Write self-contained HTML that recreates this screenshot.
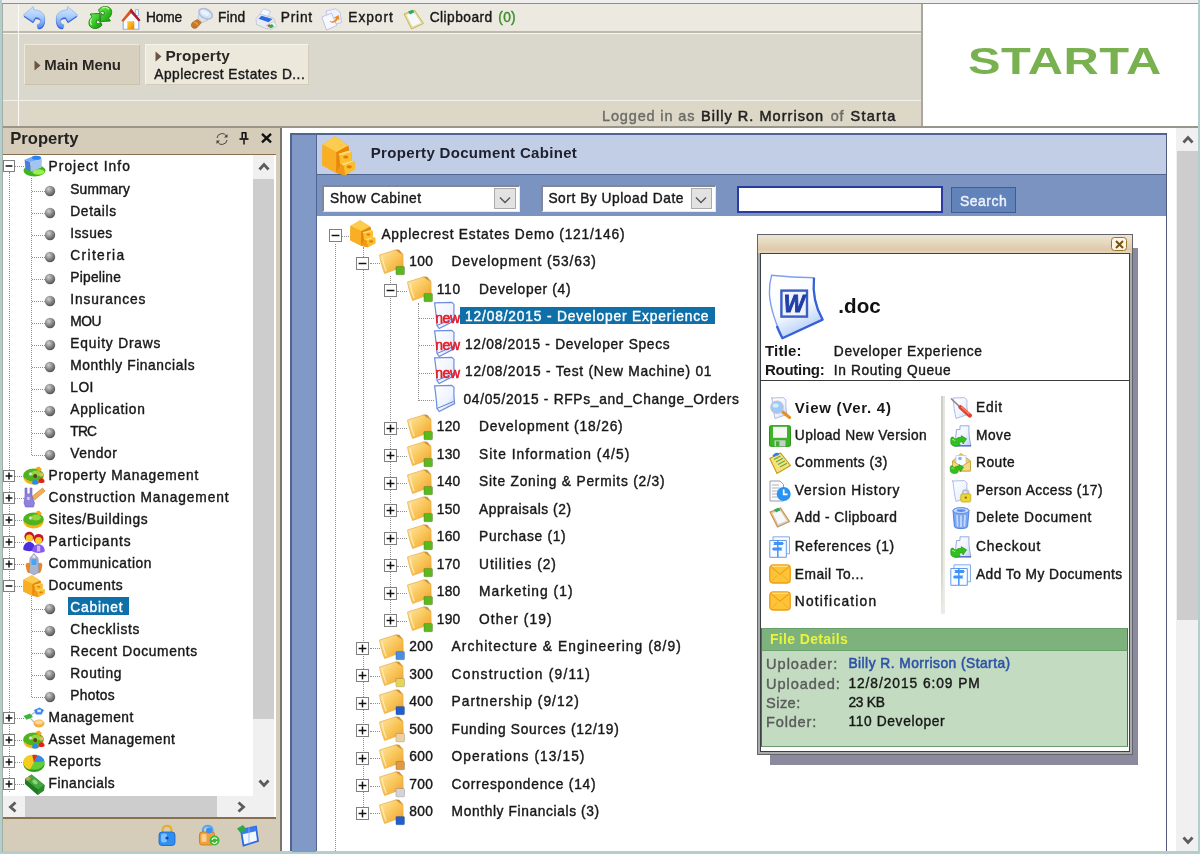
<!DOCTYPE html>
<html lang="en"><head><meta charset="utf-8"><title>Property Document Cabinet</title>
<style>
*{box-sizing:border-box;margin:0;padding:0}
html,body{width:1200px;height:854px;overflow:hidden}
body{background:#b4cfcb;font-family:"Liberation Sans","DejaVu Sans",sans-serif;font-size:13.75px;color:#181818;position:relative}
.a{position:absolute}
.t{position:absolute;white-space:pre;line-height:18px;height:18px;-webkit-text-stroke:0.4px currentColor;filter:blur(0.25px)}
.b{font-weight:bold;-webkit-text-stroke:0}
svg{position:absolute;overflow:visible}
</style></head>
<body>
<svg width="0" height="0" style="left:0;top:0"><defs><radialGradient id="bul" cx="0.38" cy="0.32" r="0.75"><stop offset="0" stop-color="#d0d0d0"/><stop offset="0.5" stop-color="#8a8a8a"/><stop offset="1" stop-color="#4a4a4a"/></radialGradient><linearGradient id="blu" x1="0" y1="0" x2="0" y2="1"><stop offset="0" stop-color="#d4e6fd"/><stop offset="0.5" stop-color="#a9cbfa"/><stop offset="1" stop-color="#5b8cec"/></linearGradient><linearGradient id="grn" x1="0" y1="0" x2="1" y2="1"><stop offset="0" stop-color="#7cf060"/><stop offset="0.6" stop-color="#2fbe20"/><stop offset="1" stop-color="#1e8a12"/></linearGradient><linearGradient id="org" x1="0" y1="0" x2="1" y2="1"><stop offset="0" stop-color="#ffd24a"/><stop offset="0.55" stop-color="#f8a818"/><stop offset="1" stop-color="#e07f08"/></linearGradient><linearGradient id="fol" x1="0" y1="0" x2="1" y2="1"><stop offset="0" stop-color="#ffe9a8"/><stop offset="0.5" stop-color="#f9c75c"/><stop offset="1" stop-color="#f0a02c"/></linearGradient><linearGradient id="pap" x1="0" y1="0" x2="1" y2="1"><stop offset="0" stop-color="#ffffff"/><stop offset="0.6" stop-color="#eef3fd"/><stop offset="1" stop-color="#b9cdf6"/></linearGradient></defs></svg>
<div class="a" style="left:2px;top:0px;width:1196px;height:3px;background:#eeeeee;"></div>
<div class="a" style="left:2px;top:3px;width:1196px;height:1px;background:#8f8f8f;"></div>
<div class="a" style="left:1.6px;top:3.5px;width:1.3px;height:848px;background:#a3aea8;"></div>
<div class="a" style="left:2.8px;top:4px;width:920.2px;height:28px;background:#ece9e0;"></div>
<div class="a" style="left:3px;top:31.3px;width:920px;height:1.3px;background:#bdb9ae;"></div>
<div class="a" style="left:3px;top:32.6px;width:920px;height:1.6px;background:#f7f5ef;"></div>
<div class="a" style="left:3px;top:34px;width:920px;height:66px;background:#dad7cd;"></div>
<div class="a" style="left:3px;top:100px;width:920px;height:1px;background:#f4f1ea;"></div>
<div class="a" style="left:3px;top:101px;width:920px;height:25px;background:#ddd7c7;"></div>
<div class="a" style="left:18px;top:4px;width:1px;height:122px;background:#fbfaf6;"></div>
<div class="a" style="left:923px;top:4px;width:275px;height:123px;background:#ffffff;"></div>
<div class="a" style="left:921.3px;top:4px;width:1.5px;height:123px;background:#a9a79f;"></div>
<div class="a" style="left:3px;top:126px;width:1195px;height:1.6px;background:#98958a;"></div>
<div class="a" style="left:3px;top:127.6px;width:1195px;height:0.4px;background:#ffffff;"></div>
<div class="t" style="left:146.0px;top:8.5px;letter-spacing:-0.20px;">Home</div>
<div class="t" style="left:218.0px;top:8.5px;letter-spacing:0.16px;">Find</div>
<div class="t" style="left:280.8px;top:8.5px;letter-spacing:0.76px;">Print</div>
<div class="t" style="left:348.3px;top:8.5px;letter-spacing:0.95px;">Export</div>
<div class="t" style="left:429.7px;top:8.5px;letter-spacing:0.46px;">Clipboard</div>
<div class="t" style="left:498.3px;top:8.5px;letter-spacing:0.27px;color:#3d8f2e;">(0)</div>
<svg style="left:23px;top:6px;filter:blur(0.5px)" width="22" height="24" viewBox="0 0 22 24"><g><path d="M0.3 9 L10.3 0.5 L10.9 3.8 C15 4 19.5 5.5 21.3 9.5 C22.3 13 21.8 17.5 19.4 20 C18 21.3 16 21.6 14.6 21.4 C14.2 20.6 14 19.8 14.1 18.8 C16.5 17.8 18 16.3 17.6 14.3 C17.2 12.3 15 11.4 12.5 11.3 L9.8 15.5 Z" transform="translate(0.3 1.7)" fill="#3a66d6"/><path d="M0.3 9 L10.3 0.5 L10.9 3.8 C15 4 19.5 5.5 21.3 9.5 C22.3 13 21.8 17.5 19.4 20 C18 21.3 16 21.6 14.6 21.4 C14.2 20.6 14 19.8 14.1 18.8 C16.5 17.8 18 16.3 17.6 14.3 C17.2 12.3 15 11.4 12.5 11.3 L9.8 15.5 Z" fill="url(#blu)" stroke="#6f9cf0" stroke-width="0.5"/></g></svg>
<svg style="left:56px;top:6px;filter:blur(0.5px)" width="22" height="24" viewBox="0 0 22 24"><g transform="translate(22 0) scale(-1 1)"><path d="M0.3 9 L10.3 0.5 L10.9 3.8 C15 4 19.5 5.5 21.3 9.5 C22.3 13 21.8 17.5 19.4 20 C18 21.3 16 21.6 14.6 21.4 C14.2 20.6 14 19.8 14.1 18.8 C16.5 17.8 18 16.3 17.6 14.3 C17.2 12.3 15 11.4 12.5 11.3 L9.8 15.5 Z" transform="translate(0.3 1.7)" fill="#3a66d6"/><path d="M0.3 9 L10.3 0.5 L10.9 3.8 C15 4 19.5 5.5 21.3 9.5 C22.3 13 21.8 17.5 19.4 20 C18 21.3 16 21.6 14.6 21.4 C14.2 20.6 14 19.8 14.1 18.8 C16.5 17.8 18 16.3 17.6 14.3 C17.2 12.3 15 11.4 12.5 11.3 L9.8 15.5 Z" fill="url(#blu)" stroke="#6f9cf0" stroke-width="0.5"/></g></svg>
<svg style="left:88.5px;top:6.3px;filter:blur(0.55px)" width="23" height="23" viewBox="0 0 23 23"><path d="M9.5 4 C12 0 19 -0.8 21.8 3 C23.6 6 22.4 10 19.6 12.2 L21.4 15 L11.4 15.6 L12 7.4 L14.4 9.2 C15.6 7.6 15.6 5.8 14.4 5.4 C13.2 5 12 5.6 11 6.8 Z" fill="url(#grn)" stroke="#1c7c10" stroke-width="0.9"/><path d="M13 19 C10.5 23 3.5 23.8 0.8 20 C-1 17 0.2 13 3 10.8 L1.2 8 L11.2 7.4 L10.6 15.6 L8.2 13.8 C7 15.4 7 17.2 8.2 17.6 C9.4 18 10.6 17.4 11.6 16.2 Z" fill="url(#grn)" stroke="#1c7c10" stroke-width="0.9"/><path d="M13 2.2 C15.5 1 18.5 1.5 20 3.5" stroke="#a8ff88" stroke-width="1.3" fill="none"/><path d="M2.5 12.5 C1.2 14.5 1.2 17 2.5 19" stroke="#a8ff88" stroke-width="1.3" fill="none"/></svg>
<svg style="left:121px;top:8.3px;filter:blur(0.45px)" width="20" height="22" viewBox="0 0 20 22"><path d="M14.5 1.5 h3 v6 h-3z" fill="#eef4ff" stroke="#8ab4f0" stroke-width="0.8"/><path d="M2.2 11.5 L10 4.5 L17.8 11.5 V21.3 H2.2Z" fill="#ffffff" stroke="#86b0ee" stroke-width="1.1"/><path d="M6.3 13.2 h7 v8 h-7z" fill="url(#org)"/><path d="M0.3 12.8 L10 0.5 L11.8 3.2 L2.5 13.8Z" fill="#e2541c"/><path d="M10 0.5 L19.6 12.2 L17.6 13.6 L9 3.6Z" fill="#a81a2c"/></svg>
<svg style="left:190.8px;top:7px;filter:blur(0.45px)" width="22" height="22" viewBox="0 0 22 22"><path d="M6.5 12.5 L10.5 15.5 L6 20.5 C4.5 22 1.5 21.5 0.6 19.5 C-0.2 17.5 0.8 16 2 15Z" fill="#c8782a" stroke="#9a5a1a" stroke-width="0.6"/><path d="M2.5 15.5 C4 15 6 16 6.5 18" stroke="#e8a050" stroke-width="1.3" fill="none"/><path d="M7 11 L9 4 L17 13 L11 15.5Z" fill="#dfe3ec" stroke="#aab0c0" stroke-width="0.6"/><ellipse cx="14.6" cy="6.8" rx="7.3" ry="4.6" transform="rotate(28 14.6 6.8)" fill="#cfe2fb" stroke="#b4bccc" stroke-width="1.5"/><ellipse cx="14" cy="6" rx="4.5" ry="2.2" transform="rotate(28 14 6)" fill="#e9f3ff"/></svg>
<svg style="left:254.5px;top:7.8px;filter:blur(0.45px)" width="22" height="22" viewBox="0 0 22 22"><path d="M4 7 L8.5 0.8 L15.5 3.2 L12.5 9Z" fill="#f4f8ff" stroke="#a9c0ea" stroke-width="0.7"/><path d="M1 10.5 L5 6 L18.5 10 L20.5 14.5 L12 21 L1.5 16.5Z" fill="#e8ebf2" stroke="#b4bacb" stroke-width="0.7"/><path d="M6.5 7.8 L17.5 11 L13.5 14.2 L3.6 10.8Z" fill="#2b6be2"/><path d="M11 17.5 L18.5 13.5 L22 18 L15 21.8Z" fill="#f0f3f8" stroke="#a8b0c0" stroke-width="0.5"/><path d="M13 18 L17 16 L19 18.6 L15.5 20.6Z" fill="#38b040"/><path d="M12.3 17.2 L14.5 16.2 L15.6 17.6 L13.4 18.8Z" fill="#e03a2a"/></svg>
<svg style="left:321.3px;top:8px;filter:blur(0.45px)" width="21" height="22" viewBox="0 0 21 22"><path d="M5 3 L14.5 0.8 L19 4 L20.5 14.5 L9 17.5Z" fill="#f1f2fc" stroke="#b4bbea" stroke-width="0.8"/><path d="M0.8 9 L10.5 5.2 L15.8 17.5 L5.5 22Z" fill="#f7f7fe" stroke="#b0b7e6" stroke-width="0.8"/><path d="M8.2 12.8 C10.5 14.3 13.5 13.3 15 10.5 L12.8 9.8 L17.6 7 L18.6 12 L16.8 11.3 C15 15 10.5 16.2 8.2 12.8Z" fill="#f08a22"/></svg>
<svg style="left:402.5px;top:8.6px;filter:blur(0.45px)" width="21" height="21" viewBox="0 0 21 21"><path d="M1 5 L11.5 1 L20.5 14.5 L8.5 20Z" fill="#e9dc98" stroke="#c9b468" stroke-width="1"/><path d="M3.5 6 L11 3.2 L18 14 L9.5 17.6Z" fill="#f6f8fb"/><path d="M5 2.6 L9.5 0.8 L11.5 3.2 L7 5.4Z" fill="#2fa968"/></svg>
<div class="a" style="left:23.8px;top:44.2px;width:116px;height:40.6px;background:#d8d0bf;border:1.4px solid #efe9da;border-right-color:#cbc2ad;border-bottom-color:#cbc2ad"></div>
<div class="a" style="left:145px;top:44px;width:163.5px;height:41px;background:#ece8dc;border:1.4px solid #f7f4ea;border-right-color:#d2ccb9;border-bottom-color:#d2ccb9"></div>
<svg style="left:33.5px;top:60px" width="7" height="11" viewBox="0 0 7 11"><path d="M0.5 0.5 L6.5 5.5 L0.5 10.5Z" fill="#6b5548"/></svg>
<svg style="left:155px;top:50.5px" width="7" height="11" viewBox="0 0 7 11"><path d="M0.5 0.5 L6.5 5.5 L0.5 10.5Z" fill="#6b5548"/></svg>
<div class="t b" style="left:44.3px;top:56.0px;font-size:15px;letter-spacing:-0.12px;color:#2a2622;">Main Menu</div>
<div class="t b" style="left:165.4px;top:46.8px;font-size:15.4px;letter-spacing:0.17px;color:#2a2622;">Property</div>
<div class="t" style="left:154.3px;top:66.3px;letter-spacing:0.48px;">Applecrest Estates D...</div>
<div class="t" style="left:602.0px;top:107.1px;font-size:14.5px;letter-spacing:0.85px;color:#6b6b68;">Logged in as</div>
<div class="t" style="left:701.0px;top:107.1px;font-size:14.5px;letter-spacing:1.04px;color:#222;-webkit-text-stroke:0.5px #222">Billy R. Morrison</div>
<div class="t" style="left:830.8px;top:107.1px;font-size:14.5px;letter-spacing:0.74px;color:#6b6b68;">of</div>
<div class="t" style="left:850.6px;top:107.1px;font-size:14.5px;letter-spacing:1.22px;color:#222;-webkit-text-stroke:0.5px #222">Starta</div>
<div class="t" style="left:967.6px;top:38px;height:48px;line-height:48px;font-size:37px;letter-spacing:0.4px;color:#7ab150;font-weight:bold;-webkit-text-stroke:0;filter:blur(0.5px);transform-origin:0 50%;transform:scaleX(1.318)">STARTA</div>
<div class="a" style="left:3px;top:128px;width:277px;height:26px;background:#d5cdba;"></div>
<div class="a" style="left:3px;top:154px;width:273px;height:1px;background:#8a6f4e;"></div>
<div class="a" style="left:3px;top:155px;width:273px;height:662px;background:#ffffff;"></div>
<div class="a" style="left:276px;top:128px;width:4px;height:723px;background:#d5cdba;"></div>
<div class="a" style="left:280px;top:128px;width:2px;height:723px;background:#777770;"></div>
<div class="t b" style="left:10.3px;top:130.0px;font-size:16.6px;letter-spacing:-0.01px;color:#222;">Property</div>
<svg style="left:215px;top:131.5px;filter:blur(0.35px)" width="14" height="14" viewBox="0 0 14 14"><path d="M2 6 A5 5 0 0 1 11.5 4.5" fill="none" stroke="#45453f" stroke-width="1"/><path d="M12.5 2 V5.5 H9Z" fill="#45453f"/><path d="M12 8 A5 5 0 0 1 2.5 9.5" fill="none" stroke="#45453f" stroke-width="1"/><path d="M1.5 12 V8.5 H5Z" fill="#45453f"/></svg>
<svg style="left:239px;top:132px;filter:blur(0.3px)" width="10" height="13" viewBox="0 0 10 13"><path d="M2.5 0.8 H7.5 M3.2 1 V6.2 M6.8 1 V6.2" stroke="#111" stroke-width="1.5" fill="none"/><path d="M5.8 1 h1.4 v5.5 h-1.4z" fill="#111"/><path d="M0.5 7 H9.5" stroke="#111" stroke-width="1.7"/><path d="M5 7.5 V12.5" stroke="#111" stroke-width="1.5"/></svg>
<svg style="left:261px;top:133px;filter:blur(0.3px)" width="11" height="10" viewBox="0 0 11 10"><path d="M1 0.8 L10 9.4 M10 0.8 L1 9.4" stroke="#111" stroke-width="2.4"/></svg>
<div class="a" style="left:253px;top:155px;width:21px;height:662px;background:#f0f0f0;"></div>
<div class="a" style="left:253px;top:178.5px;width:20.5px;height:540px;background:#cdcdcd;"></div>
<div class="a" style="left:3px;top:796px;width:271px;height:21px;background:#f0f0f0;"></div>
<div class="a" style="left:24.5px;top:796px;width:192.5px;height:21px;background:#cdcdcd;"></div>
<div class="a" style="left:3px;top:817px;width:273px;height:1.5px;background:#8a6f4e;"></div>
<div class="a" style="left:3px;top:818.5px;width:273px;height:32.5px;background:#d5cdba;"></div>
<svg style="left:255.5px;top:158.5px" width="16" height="16" viewBox="0 0 16 16"><path d="M-4.5 2.5 L0 -2.5 L4.5 2.5" transform="translate(8 8)" fill="none" stroke="#5c5c5c" stroke-width="2.8"/></svg>
<svg style="left:255.5px;top:775px" width="16" height="16" viewBox="0 0 16 16"><path d="M-4.5 -2.5 L0 2.5 L4.5 -2.5" transform="translate(8 8)" fill="none" stroke="#5c5c5c" stroke-width="2.8"/></svg>
<svg style="left:4.5px;top:798.5px" width="16" height="16" viewBox="0 0 16 16"><path d="M2.5 -4.5 L-2.5 0 L2.5 4.5" transform="translate(8 8)" fill="none" stroke="#5c5c5c" stroke-width="2.8"/></svg>
<svg style="left:232.5px;top:798.5px" width="16" height="16" viewBox="0 0 16 16"><path d="M-2.5 -4.5 L2.5 0 L-2.5 4.5" transform="translate(8 8)" fill="none" stroke="#5c5c5c" stroke-width="2.8"/></svg>
<div class="a" style="left:9px;top:172px;height:620px;width:0;border-left:1px dotted #8f8f8f"></div>
<div class="a" style="left:31px;top:178px;height:276.5px;width:0;border-left:1px dotted #8f8f8f"></div>
<div class="a" style="left:31px;top:596px;height:100.5px;width:0;border-left:1px dotted #8f8f8f"></div>
<div class="a" style="left:15px;top:165.8px;width:9px;height:0;border-top:1px dotted #8f8f8f"></div>
<svg style="left:3.0px;top:159.8px;filter:blur(0.25px)" width="12" height="12" viewBox="0 0 12 12"><rect x="0.5" y="0.5" width="11" height="11" fill="#fff" stroke="#808080"/><path d="M2.6 6.0 H9.4" stroke="#111" stroke-width="1.5"/></svg>
<svg style="left:23px;top:155.3px;filter:blur(0.5px)" width="22" height="23" viewBox="0 0 22 23"><ellipse cx="11.5" cy="15.6" rx="11" ry="5.8" fill="#3eb51c"/><ellipse cx="15.5" cy="17" rx="6" ry="2.8" fill="#9cf048"/><path d="M1.6 4.8 L7.4 7 L7.6 16.8 L2.4 13.6Z" fill="#4a7ce0"/><path d="M7.4 7 L19 4 L18.6 12.6 L7.6 16.8Z" fill="#a4c4f0"/><path d="M1.6 4.8 L12 0.6 L19 4 L7.4 7Z" fill="#72acf6"/><ellipse cx="13.5" cy="2.8" rx="4.6" ry="2" fill="#2a84f6"/></svg>
<div class="t" style="left:48.5px;top:158.3px;letter-spacing:1.07px;">Project Info</div>
<div class="a" style="left:32px;top:190.5px;width:13px;height:0;border-top:1px dotted #8f8f8f"></div>
<svg style="left:44.3px;top:184.5px;filter:blur(0.3px)" width="12" height="12" viewBox="0 0 12 12"><circle cx="6" cy="6" r="5.2" fill="url(#bul)"/></svg>
<div class="t" style="left:70.3px;top:180.6px;letter-spacing:0.13px;">Summary</div>
<div class="a" style="left:32px;top:212.5px;width:13px;height:0;border-top:1px dotted #8f8f8f"></div>
<svg style="left:44.3px;top:206.5px;filter:blur(0.3px)" width="12" height="12" viewBox="0 0 12 12"><circle cx="6" cy="6" r="5.2" fill="url(#bul)"/></svg>
<div class="t" style="left:70.3px;top:202.6px;letter-spacing:0.63px;">Details</div>
<div class="a" style="left:32px;top:234.5px;width:13px;height:0;border-top:1px dotted #8f8f8f"></div>
<svg style="left:44.3px;top:228.5px;filter:blur(0.3px)" width="12" height="12" viewBox="0 0 12 12"><circle cx="6" cy="6" r="5.2" fill="url(#bul)"/></svg>
<div class="t" style="left:70.3px;top:224.6px;letter-spacing:0.43px;">Issues</div>
<div class="a" style="left:32px;top:256.5px;width:13px;height:0;border-top:1px dotted #8f8f8f"></div>
<svg style="left:44.3px;top:250.5px;filter:blur(0.3px)" width="12" height="12" viewBox="0 0 12 12"><circle cx="6" cy="6" r="5.2" fill="url(#bul)"/></svg>
<div class="t" style="left:70.3px;top:246.6px;letter-spacing:1.36px;">Criteria</div>
<div class="a" style="left:32px;top:278.5px;width:13px;height:0;border-top:1px dotted #8f8f8f"></div>
<svg style="left:44.3px;top:272.5px;filter:blur(0.3px)" width="12" height="12" viewBox="0 0 12 12"><circle cx="6" cy="6" r="5.2" fill="url(#bul)"/></svg>
<div class="t" style="left:70.3px;top:268.6px;letter-spacing:0.24px;">Pipeline</div>
<div class="a" style="left:32px;top:300.5px;width:13px;height:0;border-top:1px dotted #8f8f8f"></div>
<svg style="left:44.3px;top:294.5px;filter:blur(0.3px)" width="12" height="12" viewBox="0 0 12 12"><circle cx="6" cy="6" r="5.2" fill="url(#bul)"/></svg>
<div class="t" style="left:70.3px;top:290.6px;letter-spacing:0.86px;">Insurances</div>
<div class="a" style="left:32px;top:322.5px;width:13px;height:0;border-top:1px dotted #8f8f8f"></div>
<svg style="left:44.3px;top:316.5px;filter:blur(0.3px)" width="12" height="12" viewBox="0 0 12 12"><circle cx="6" cy="6" r="5.2" fill="url(#bul)"/></svg>
<div class="t" style="left:70.3px;top:312.6px;letter-spacing:-0.48px;">MOU</div>
<div class="a" style="left:32px;top:344.5px;width:13px;height:0;border-top:1px dotted #8f8f8f"></div>
<svg style="left:44.3px;top:338.5px;filter:blur(0.3px)" width="12" height="12" viewBox="0 0 12 12"><circle cx="6" cy="6" r="5.2" fill="url(#bul)"/></svg>
<div class="t" style="left:70.3px;top:334.6px;letter-spacing:0.83px;">Equity Draws</div>
<div class="a" style="left:32px;top:366.5px;width:13px;height:0;border-top:1px dotted #8f8f8f"></div>
<svg style="left:44.3px;top:360.5px;filter:blur(0.3px)" width="12" height="12" viewBox="0 0 12 12"><circle cx="6" cy="6" r="5.2" fill="url(#bul)"/></svg>
<div class="t" style="left:70.3px;top:356.6px;letter-spacing:0.61px;">Monthly Financials</div>
<div class="a" style="left:32px;top:388.5px;width:13px;height:0;border-top:1px dotted #8f8f8f"></div>
<svg style="left:44.3px;top:382.5px;filter:blur(0.3px)" width="12" height="12" viewBox="0 0 12 12"><circle cx="6" cy="6" r="5.2" fill="url(#bul)"/></svg>
<div class="t" style="left:70.3px;top:378.6px;letter-spacing:0.49px;">LOI</div>
<div class="a" style="left:32px;top:410.5px;width:13px;height:0;border-top:1px dotted #8f8f8f"></div>
<svg style="left:44.3px;top:404.5px;filter:blur(0.3px)" width="12" height="12" viewBox="0 0 12 12"><circle cx="6" cy="6" r="5.2" fill="url(#bul)"/></svg>
<div class="t" style="left:70.3px;top:400.6px;letter-spacing:0.73px;">Application</div>
<div class="a" style="left:32px;top:432.5px;width:13px;height:0;border-top:1px dotted #8f8f8f"></div>
<svg style="left:44.3px;top:426.5px;filter:blur(0.3px)" width="12" height="12" viewBox="0 0 12 12"><circle cx="6" cy="6" r="5.2" fill="url(#bul)"/></svg>
<div class="t" style="left:70.3px;top:422.6px;letter-spacing:-0.80px;">TRC</div>
<div class="a" style="left:32px;top:454.5px;width:13px;height:0;border-top:1px dotted #8f8f8f"></div>
<svg style="left:44.3px;top:448.5px;filter:blur(0.3px)" width="12" height="12" viewBox="0 0 12 12"><circle cx="6" cy="6" r="5.2" fill="url(#bul)"/></svg>
<div class="t" style="left:70.3px;top:444.6px;letter-spacing:0.58px;">Vendor</div>
<div class="a" style="left:15px;top:476.4px;width:9px;height:0;border-top:1px dotted #8f8f8f"></div>
<svg style="left:3.0px;top:470.4px;filter:blur(0.25px)" width="12" height="12" viewBox="0 0 12 12"><rect x="0.5" y="0.5" width="11" height="11" fill="#fff" stroke="#808080"/><path d="M2.6 6.0 H9.4" stroke="#111" stroke-width="1.5"/><path d="M6.0 2.6 V9.4" stroke="#111" stroke-width="1.5"/></svg>
<svg style="left:23px;top:464.5px;filter:blur(0.5px)" width="22" height="23" viewBox="0 0 22 23"><ellipse cx="10.5" cy="12" rx="10.3" ry="7.5" fill="#f2c21e"/><ellipse cx="10.5" cy="10.2" rx="10.2" ry="6.8" fill="#4fb21e"/><ellipse cx="13" cy="8.5" rx="5" ry="3" fill="#8fd63a"/><path d="M12.5 3 l3.5 -1.5 l3 3 l-3 2z" fill="#f0a818"/><circle cx="7.5" cy="9" r="1.7" fill="#d8d8d0"/><path d="M2 13 C5 17 14 18 20 13 L19 16 C14 20 6 19.5 2.5 16Z" fill="#f5b216"/><circle cx="12.2" cy="11" r="2" fill="#5a4020"/><path d="M9 18.6 C9 13.4 15.6 13.4 15.6 18.6 C14 20.2 10.5 20.2 9 18.6Z" fill="#2a8aee"/><circle cx="18.3" cy="9.6" r="2.1" fill="#f0b060"/><path d="M15.4 17 C15.4 12 21.6 12 21.6 17 C20.3 18.4 16.6 18.4 15.4 17Z" fill="#e22020"/></svg>
<div class="t" style="left:48.5px;top:466.6px;letter-spacing:0.76px;">Property Management</div>
<div class="a" style="left:15px;top:498.4px;width:9px;height:0;border-top:1px dotted #8f8f8f"></div>
<svg style="left:3.0px;top:492.4px;filter:blur(0.25px)" width="12" height="12" viewBox="0 0 12 12"><rect x="0.5" y="0.5" width="11" height="11" fill="#fff" stroke="#808080"/><path d="M2.6 6.0 H9.4" stroke="#111" stroke-width="1.5"/><path d="M6.0 2.6 V9.4" stroke="#111" stroke-width="1.5"/></svg>
<svg style="left:23px;top:486.5px;filter:blur(0.5px)" width="22" height="23" viewBox="0 0 22 23"><path d="M9 9.5 L19.5 1 L22 4 L11.5 13Z" fill="#f3ad55" stroke="#d88828" stroke-width="0.7"/><path d="M2 1 h2 v6 h3 v-6 h2 v8 l2.5 7 l-1 4 h-8 l-1.5 -4 l1 -7z" fill="#8f82dc" stroke="#6a5cc0" stroke-width="0.6"/><rect x="4.2" y="10" width="2.4" height="3" fill="#d0d0e8"/></svg>
<div class="t" style="left:48.5px;top:488.6px;letter-spacing:0.85px;">Construction Management</div>
<div class="a" style="left:15px;top:520.4px;width:9px;height:0;border-top:1px dotted #8f8f8f"></div>
<svg style="left:3.0px;top:514.4px;filter:blur(0.25px)" width="12" height="12" viewBox="0 0 12 12"><rect x="0.5" y="0.5" width="11" height="11" fill="#fff" stroke="#808080"/><path d="M2.6 6.0 H9.4" stroke="#111" stroke-width="1.5"/><path d="M6.0 2.6 V9.4" stroke="#111" stroke-width="1.5"/></svg>
<svg style="left:23px;top:508.5px;filter:blur(0.5px)" width="22" height="23" viewBox="0 0 22 23"><ellipse cx="10.5" cy="12" rx="10.3" ry="7.5" fill="#f2c21e"/><ellipse cx="10.5" cy="10.2" rx="10.2" ry="6.8" fill="#4fb21e"/><ellipse cx="13" cy="8.5" rx="5" ry="3" fill="#8fd63a"/><path d="M12.5 3 l3.5 -1.5 l3 3 l-3 2z" fill="#f0a818"/><circle cx="7.5" cy="9" r="1.7" fill="#d8d8d0"/><path d="M2 13 C5 17 14 18 20 13 L19 16 C14 20 6 19.5 2.5 16Z" fill="#f5b216"/></svg>
<div class="t" style="left:48.5px;top:510.6px;letter-spacing:0.64px;">Sites/Buildings</div>
<div class="a" style="left:15px;top:542.4px;width:9px;height:0;border-top:1px dotted #8f8f8f"></div>
<svg style="left:3.0px;top:536.4px;filter:blur(0.25px)" width="12" height="12" viewBox="0 0 12 12"><rect x="0.5" y="0.5" width="11" height="11" fill="#fff" stroke="#808080"/><path d="M2.6 6.0 H9.4" stroke="#111" stroke-width="1.5"/><path d="M6.0 2.6 V9.4" stroke="#111" stroke-width="1.5"/></svg>
<svg style="left:23px;top:530.5px;filter:blur(0.5px)" width="22" height="23" viewBox="0 0 22 23"><circle cx="6.3" cy="5.6" r="4.9" fill="#c2182e"/><circle cx="6.3" cy="7" r="3.5" fill="#f9cc22"/><path d="M0.2 18.5 C0.2 8.5 12.4 8.5 12.4 18.5 C10 20.8 3 20.8 0.2 18.5Z" fill="#4a2fe0"/><circle cx="6.3" cy="7.2" r="3.3" fill="#f9cc22"/><circle cx="15.6" cy="7.8" r="4.9" fill="#c2182e"/><path d="M9.2 20.3 C9.2 10.8 21.8 10.8 21.8 20.3 C19 22.6 12 22.6 9.2 20.3Z" fill="#8a5af0"/><circle cx="15.6" cy="9.4" r="3.5" fill="#f9cc22"/><path d="M14 14.8 h3.2 v5.6 h-3.2z" fill="#c8b8ff"/></svg>
<div class="t" style="left:48.5px;top:532.6px;letter-spacing:0.94px;">Participants</div>
<div class="a" style="left:15px;top:564.4px;width:9px;height:0;border-top:1px dotted #8f8f8f"></div>
<svg style="left:3.0px;top:558.4px;filter:blur(0.25px)" width="12" height="12" viewBox="0 0 12 12"><rect x="0.5" y="0.5" width="11" height="11" fill="#fff" stroke="#808080"/><path d="M2.6 6.0 H9.4" stroke="#111" stroke-width="1.5"/><path d="M6.0 2.6 V9.4" stroke="#111" stroke-width="1.5"/></svg>
<svg style="left:23px;top:552.5px;filter:blur(0.5px)" width="22" height="23" viewBox="0 0 22 23"><path d="M3 14 C1.5 10 5 8.5 7 11 L7 20 C5 21 3.5 18 3 14Z" fill="#ea8a1e"/><path d="M19 14 C20.5 10 17 8.5 15 11 L15 20 C17 21 18.5 18 19 14Z" fill="#ea8a1e"/><path d="M7 5 L11 0.5 L15 5 L16 19 L11 22 L6 19Z" fill="#aab4cc" stroke="#8088a8" stroke-width="0.6"/><path d="M8.5 6 h5 v6 h-5z" fill="#48a4f4"/><circle cx="11" cy="3.6" r="1.6" fill="#d8e4fa"/></svg>
<div class="t" style="left:48.5px;top:554.6px;letter-spacing:0.62px;">Communication</div>
<div class="a" style="left:15px;top:586.4px;width:9px;height:0;border-top:1px dotted #8f8f8f"></div>
<svg style="left:3.0px;top:580.4px;filter:blur(0.25px)" width="12" height="12" viewBox="0 0 12 12"><rect x="0.5" y="0.5" width="11" height="11" fill="#fff" stroke="#808080"/><path d="M2.6 6.0 H9.4" stroke="#111" stroke-width="1.5"/></svg>
<svg style="left:23px;top:574.5px;filter:blur(0.5px)" width="22" height="23" viewBox="0 0 22 23"><g transform="scale(0.66 0.565)"><path d="M13.2 0.3 L26.3 9.7 L27.2 14.3 L29.6 16.1 L29.6 24.5 L32.6 25 L32.8 33.1 L23.1 38.9 L14.3 36.6 L0.3 29 L0.6 8.5Z" fill="#f5a31a"/><path d="M13.2 0.3 L26.3 9.7 L14.3 16.1 L0.6 8.5Z" fill="#fdcb4e"/><path d="M0.6 8.5 L14.3 16.1 L14.3 36.6 L0.3 29Z" fill="#f9ae24"/><path d="M14.3 16.1 L26.3 9.7 L27.2 14.3 L16.5 17.5 L18 28 L19 27.5 L14.3 36.6Z" fill="#e8860c"/><path d="M16.5 17.5 L27.2 14.3 L29.6 16.1 L18 19.5Z" fill="#fedb6c"/><path d="M18 19.5 L29.6 16.1 L29.6 24.5 L18 28Z" fill="#fbc030"/><path d="M19 27.5 L29.6 24.5 L32.7 25 L21.5 29.5Z" fill="#fedb6c"/><path d="M21.5 29.5 L32.7 25 L32.8 33.1 L23.1 38.9Z" fill="#fbbf2e"/><path d="M14.3 36.6 L19 27.5 L21.5 29.5 L23.1 38.9Z" fill="#f19814"/><ellipse cx="23.8" cy="20.8" rx="2.6" ry="1.5" fill="#df7d08"/><ellipse cx="27.3" cy="30.6" rx="2.6" ry="1.6" fill="#df7d08"/></g></svg>
<div class="t" style="left:48.5px;top:576.6px;letter-spacing:0.58px;">Documents</div>
<div class="a" style="left:32px;top:608.5px;width:13px;height:0;border-top:1px dotted #8f8f8f"></div>
<svg style="left:44.3px;top:602.5px;filter:blur(0.3px)" width="12" height="12" viewBox="0 0 12 12"><circle cx="6" cy="6" r="5.2" fill="url(#bul)"/></svg>
<div class="a" style="left:67.5px;top:597.3px;width:61.5px;height:18px;background:#0f6fa8;"></div>
<div class="t" style="left:70.3px;top:598.6px;letter-spacing:0.81px;color:#fff;">Cabinet</div>
<div class="a" style="left:32px;top:630.5px;width:13px;height:0;border-top:1px dotted #8f8f8f"></div>
<svg style="left:44.3px;top:624.5px;filter:blur(0.3px)" width="12" height="12" viewBox="0 0 12 12"><circle cx="6" cy="6" r="5.2" fill="url(#bul)"/></svg>
<div class="t" style="left:70.3px;top:620.6px;letter-spacing:0.72px;">Checklists</div>
<div class="a" style="left:32px;top:652.5px;width:13px;height:0;border-top:1px dotted #8f8f8f"></div>
<svg style="left:44.3px;top:646.5px;filter:blur(0.3px)" width="12" height="12" viewBox="0 0 12 12"><circle cx="6" cy="6" r="5.2" fill="url(#bul)"/></svg>
<div class="t" style="left:70.3px;top:642.6px;letter-spacing:0.66px;">Recent Documents</div>
<div class="a" style="left:32px;top:674.5px;width:13px;height:0;border-top:1px dotted #8f8f8f"></div>
<svg style="left:44.3px;top:668.5px;filter:blur(0.3px)" width="12" height="12" viewBox="0 0 12 12"><circle cx="6" cy="6" r="5.2" fill="url(#bul)"/></svg>
<div class="t" style="left:70.3px;top:664.6px;letter-spacing:0.63px;">Routing</div>
<div class="a" style="left:32px;top:696.5px;width:13px;height:0;border-top:1px dotted #8f8f8f"></div>
<svg style="left:44.3px;top:690.5px;filter:blur(0.3px)" width="12" height="12" viewBox="0 0 12 12"><circle cx="6" cy="6" r="5.2" fill="url(#bul)"/></svg>
<div class="t" style="left:70.3px;top:686.6px;letter-spacing:0.31px;">Photos</div>
<div class="a" style="left:15px;top:718.4px;width:9px;height:0;border-top:1px dotted #8f8f8f"></div>
<svg style="left:3.0px;top:712.4px;filter:blur(0.25px)" width="12" height="12" viewBox="0 0 12 12"><rect x="0.5" y="0.5" width="11" height="11" fill="#fff" stroke="#808080"/><path d="M2.6 6.0 H9.4" stroke="#111" stroke-width="1.5"/><path d="M6.0 2.6 V9.4" stroke="#111" stroke-width="1.5"/></svg>
<svg style="left:23px;top:706.5px;filter:blur(0.5px)" width="22" height="23" viewBox="0 0 22 23"><path d="M6 9.5 L13 4.5 M12 16 L6 10" stroke="#b8bcc8" stroke-width="1.2"/><path d="M0.5 9 L7 6.5 L10 10 L3.5 12.8Z" fill="#3db53a"/><path d="M11 3 L16.5 0.5 L21 3 L18.5 7.5 L13 7.5Z" fill="#3a86f0"/><rect x="14.3" y="2.6" width="3.6" height="2.6" fill="#d8e8ff"/><ellipse cx="16" cy="16.5" rx="5.5" ry="4" fill="#f2b04a"/><ellipse cx="16" cy="15.3" rx="3.8" ry="2" fill="#fbd898"/></svg>
<div class="t" style="left:48.5px;top:708.6px;letter-spacing:0.50px;">Management</div>
<div class="a" style="left:15px;top:740.4px;width:9px;height:0;border-top:1px dotted #8f8f8f"></div>
<svg style="left:3.0px;top:734.4px;filter:blur(0.25px)" width="12" height="12" viewBox="0 0 12 12"><rect x="0.5" y="0.5" width="11" height="11" fill="#fff" stroke="#808080"/><path d="M2.6 6.0 H9.4" stroke="#111" stroke-width="1.5"/><path d="M6.0 2.6 V9.4" stroke="#111" stroke-width="1.5"/></svg>
<svg style="left:23px;top:728.5px;filter:blur(0.5px)" width="22" height="23" viewBox="0 0 22 23"><ellipse cx="10.5" cy="12" rx="10.3" ry="7.5" fill="#f2c21e"/><ellipse cx="10.5" cy="10.2" rx="10.2" ry="6.8" fill="#4fb21e"/><ellipse cx="13" cy="8.5" rx="5" ry="3" fill="#8fd63a"/><path d="M12.5 3 l3.5 -1.5 l3 3 l-3 2z" fill="#f0a818"/><circle cx="7.5" cy="9" r="1.7" fill="#d8d8d0"/><path d="M2 13 C5 17 14 18 20 13 L19 16 C14 20 6 19.5 2.5 16Z" fill="#f5b216"/><circle cx="12.2" cy="11" r="2" fill="#5a4020"/><path d="M9 18.6 C9 13.4 15.6 13.4 15.6 18.6 C14 20.2 10.5 20.2 9 18.6Z" fill="#2a8aee"/><circle cx="18.3" cy="9.6" r="2.1" fill="#f0b060"/><path d="M15.4 17 C15.4 12 21.6 12 21.6 17 C20.3 18.4 16.6 18.4 15.4 17Z" fill="#e22020"/></svg>
<div class="t" style="left:48.5px;top:730.6px;letter-spacing:0.53px;">Asset Management</div>
<div class="a" style="left:15px;top:762.4px;width:9px;height:0;border-top:1px dotted #8f8f8f"></div>
<svg style="left:3.0px;top:756.4px;filter:blur(0.25px)" width="12" height="12" viewBox="0 0 12 12"><rect x="0.5" y="0.5" width="11" height="11" fill="#fff" stroke="#808080"/><path d="M2.6 6.0 H9.4" stroke="#111" stroke-width="1.5"/><path d="M6.0 2.6 V9.4" stroke="#111" stroke-width="1.5"/></svg>
<svg style="left:23px;top:750.5px;filter:blur(0.5px)" width="22" height="23" viewBox="0 0 22 23"><ellipse cx="11" cy="13.5" rx="10.6" ry="7.6" fill="#2e9e1c"/><ellipse cx="11" cy="11.3" rx="10.6" ry="7.4" fill="#63cf38"/><path d="M11 11.3 L9 3.8 C3 4.5 -0.5 8 0.5 12.5 C1 15.5 4 18 7 18.6Z" fill="#f8cb1c"/><path d="M11 11.3 L9.3 3.9 C11 3.6 13 3.7 14.5 4.2Z" fill="#e23020"/><path d="M11 11.3 L14.8 4.3 C18.5 5 21.3 8 21.5 10.6Z" fill="#3a86ea"/></svg>
<div class="t" style="left:48.5px;top:752.6px;letter-spacing:0.71px;">Reports</div>
<div class="a" style="left:15px;top:784.4px;width:9px;height:0;border-top:1px dotted #8f8f8f"></div>
<svg style="left:3.0px;top:778.4px;filter:blur(0.25px)" width="12" height="12" viewBox="0 0 12 12"><rect x="0.5" y="0.5" width="11" height="11" fill="#fff" stroke="#808080"/><path d="M2.6 6.0 H9.4" stroke="#111" stroke-width="1.5"/><path d="M6.0 2.6 V9.4" stroke="#111" stroke-width="1.5"/></svg>
<svg style="left:23px;top:772.5px;filter:blur(0.5px)" width="22" height="23" viewBox="0 0 22 23"><path d="M2 6 L8.5 1.5 L21.5 12 L21 17.5 L14.5 22 L2 11Z" fill="#1f7a24"/><path d="M2 6 L8.5 1.5 L21.5 12 L15 16.5Z" fill="#43a83e"/><ellipse cx="12" cy="9" rx="3" ry="2" transform="rotate(38 12 9)" fill="#8fd27c"/><path d="M5.5 3.5 L8 5.5 L4.5 8 L2.2 6Z" fill="#c8a058"/><path d="M15 16.5 L21.5 12 L21 17.5 L14.5 22Z" fill="#2a8a2c"/></svg>
<div class="t" style="left:48.5px;top:774.6px;letter-spacing:0.48px;">Financials</div>
<svg style="left:158px;top:824px;filter:blur(0.5px)" width="18" height="22" viewBox="0 0 18 22"><path d="M4.5 9 V6 C4.5 0.5 13.5 0.5 13.5 6 V9" fill="none" stroke="#e8b020" stroke-width="2.2"/><rect x="1" y="8" width="16" height="13.5" rx="3" fill="#2f8ef0" stroke="#1a62c8" stroke-width="0.8"/><rect x="3" y="9.5" width="6" height="9" rx="2" fill="#7cc0ff"/><circle cx="9" cy="14" r="1.6" fill="#0e4aa0"/></svg>
<svg style="left:198px;top:824px;filter:blur(0.5px)" width="22" height="22" viewBox="0 0 22 22"><path d="M5 9 V6 C5 0.5 14.5 0.5 14.5 6 V9" fill="none" stroke="#58a8f0" stroke-width="2.2"/><rect x="1.5" y="8" width="15" height="13" rx="2.5" fill="#f0a040" stroke="#c87818" stroke-width="0.8"/><rect x="3.5" y="10" width="5" height="8" rx="1.5" fill="#fbd090"/><circle cx="16.5" cy="16.5" r="5" fill="#3eb83a"/><path d="M14 16 a2.7 2.7 0 0 1 5 -0.8 M19.2 17.2 a2.7 2.7 0 0 1 -5 0.8" stroke="#e8ffd8" stroke-width="1.2" fill="none"/><circle cx="11" cy="6.5" r="3" fill="#3a90f0"/></svg>
<svg style="left:236px;top:824px;filter:blur(0.5px)" width="23" height="22" viewBox="0 0 23 22"><path d="M5 6 L20 2.5 L22 17 L7.5 21.5Z" fill="#f2f6ff" stroke="#2a6ae0" stroke-width="1.8"/><path d="M5 6 L20 2.5 L20.6 7 L5.6 10.5Z" fill="#3a7af0"/><path d="M1 4.5 L7 1 L10.5 5.5 L4.5 9Z" fill="#30a848"/><path d="M13 3 v17" stroke="#8ab0f0" stroke-width="0.8"/></svg>
<div class="a" style="left:282px;top:128px;width:916px;height:723px;background:#ffffff;"></div>
<div class="a" style="left:290px;top:133px;width:877px;height:718px;background:#506690;"></div>
<div class="a" style="left:291.6px;top:134.5px;width:24.6px;height:717px;background:#8099c6;"></div>
<div class="a" style="left:317px;top:134.5px;width:848.5px;height:39.5px;background:#c1cee6;"></div>
<div class="a" style="left:317px;top:175px;width:849px;height:41px;background:#7b93c0;"></div>
<div class="a" style="left:317px;top:216px;width:849px;height:635px;background:#ffffff;"></div>
<div class="a" style="left:1165.5px;top:133px;width:1.5px;height:718px;background:#50597a;"></div>
<div class="a" style="left:1176px;top:128px;width:22px;height:723px;background:#f0f0f0;"></div>
<div class="a" style="left:1176.5px;top:151px;width:21px;height:469px;background:#cdcdcd;"></div>
<svg style="left:1179.5px;top:131.5px" width="16" height="16" viewBox="0 0 16 16"><path d="M-4.5 2.5 L0 -2.5 L4.5 2.5" transform="translate(8 8)" fill="none" stroke="#5c5c5c" stroke-width="2.8"/></svg>
<svg style="left:1179.5px;top:832px" width="16" height="16" viewBox="0 0 16 16"><path d="M-4.5 -2.5 L0 2.5 L4.5 -2.5" transform="translate(8 8)" fill="none" stroke="#5c5c5c" stroke-width="2.8"/></svg>
<svg style="left:321.6px;top:135.6px;filter:blur(0.5px)" width="33" height="39.5" viewBox="0 0 33 39.2" preserveAspectRatio="none"><path d="M13.2 0.3 L26.3 9.7 L27.2 14.3 L29.6 16.1 L29.6 24.5 L32.6 25 L32.8 33.1 L23.1 38.9 L14.3 36.6 L0.3 29 L0.6 8.5Z" fill="#f5a31a"/><path d="M13.2 0.3 L26.3 9.7 L14.3 16.1 L0.6 8.5Z" fill="#fdcb4e"/><path d="M0.6 8.5 L14.3 16.1 L14.3 36.6 L0.3 29Z" fill="#f9ae24"/><path d="M14.3 16.1 L26.3 9.7 L27.2 14.3 L16.5 17.5 L18 28 L19 27.5 L14.3 36.6Z" fill="#e8860c"/><path d="M16.5 17.5 L27.2 14.3 L29.6 16.1 L18 19.5Z" fill="#fedb6c"/><path d="M18 19.5 L29.6 16.1 L29.6 24.5 L18 28Z" fill="#fbc030"/><path d="M19 27.5 L29.6 24.5 L32.7 25 L21.5 29.5Z" fill="#fedb6c"/><path d="M21.5 29.5 L32.7 25 L32.8 33.1 L23.1 38.9Z" fill="#fbbf2e"/><path d="M14.3 36.6 L19 27.5 L21.5 29.5 L23.1 38.9Z" fill="#f19814"/><ellipse cx="23.8" cy="20.8" rx="2.6" ry="1.5" fill="#df7d08"/><ellipse cx="27.3" cy="30.6" rx="2.6" ry="1.6" fill="#df7d08"/></svg>
<div class="t b" style="left:370.8px;top:144.1px;font-size:15px;letter-spacing:0.32px;color:#1c2030;">Property Document Cabinet</div>
<div class="a" style="left:322px;top:185px;width:197.5px;height:27px;background:#ffffff;border:1.5px solid #e3e8f2;border-top:2px solid #80879a;border-left:2px solid #80879a"></div>
<div class="a" style="left:494.0px;top:187.5px;width:21.5px;height:21.5px;background:#e2e2e2;border:1px solid #ababab"></div>
<svg style="left:498.5px;top:195.5px" width="12" height="8" viewBox="0 0 12 8"><path d="M1 1.5 L6 6.5 L11 1.5" fill="none" stroke="#555" stroke-width="1.4"/></svg>
<div class="t" style="left:330.0px;top:189.8px;letter-spacing:0.49px;">Show Cabinet</div>
<div class="a" style="left:541px;top:185px;width:175px;height:27px;background:#ffffff;border:1.5px solid #e3e8f2;border-top:2px solid #80879a;border-left:2px solid #80879a"></div>
<div class="a" style="left:690.5px;top:187.5px;width:21.5px;height:21.5px;background:#e2e2e2;border:1px solid #ababab"></div>
<svg style="left:695px;top:195.5px" width="12" height="8" viewBox="0 0 12 8"><path d="M1 1.5 L6 6.5 L11 1.5" fill="none" stroke="#555" stroke-width="1.4"/></svg>
<div class="t" style="left:548.4px;top:189.8px;letter-spacing:0.54px;">Sort By Upload Date</div>
<div class="a" style="left:737px;top:186px;width:206px;height:27px;background:#ffffff;border:2px solid #2b3aa0"></div>
<div class="a" style="left:951px;top:187px;width:65px;height:26px;background:#6283ba;border:1px solid #3f5d90"></div>
<div class="t" style="left:960.0px;top:191.7px;font-size:14px;letter-spacing:0.48px;color:#eef3fb;">Search</div>
<div class="a" style="left:335px;top:244px;height:607px;width:0;border-left:1px dotted #8f8f8f"></div>
<div class="a" style="left:362.5px;top:247px;height:566.0px;width:0;border-left:1px dotted #8f8f8f"></div>
<div class="a" style="left:390px;top:276px;height:344.5px;width:0;border-left:1px dotted #8f8f8f"></div>
<div class="a" style="left:417.5px;top:303px;height:97.5px;width:0;border-left:1px dotted #8f8f8f"></div>
<div class="a" style="left:342px;top:235.5px;width:9px;height:0;border-top:1px dotted #8f8f8f"></div>
<svg style="left:328.7px;top:229.0px;filter:blur(0.25px)" width="13" height="13" viewBox="0 0 13 13"><rect x="0.5" y="0.5" width="12" height="12" fill="#fff" stroke="#808080"/><path d="M2.6 6.5 H10.4" stroke="#111" stroke-width="1.5"/></svg>
<svg style="left:350px;top:220px;filter:blur(0.5px)" width="25.5" height="27.5" viewBox="0 0 33 39.2" preserveAspectRatio="none"><path d="M13.2 0.3 L26.3 9.7 L27.2 14.3 L29.6 16.1 L29.6 24.5 L32.6 25 L32.8 33.1 L23.1 38.9 L14.3 36.6 L0.3 29 L0.6 8.5Z" fill="#f5a31a"/><path d="M13.2 0.3 L26.3 9.7 L14.3 16.1 L0.6 8.5Z" fill="#fdcb4e"/><path d="M0.6 8.5 L14.3 16.1 L14.3 36.6 L0.3 29Z" fill="#f9ae24"/><path d="M14.3 16.1 L26.3 9.7 L27.2 14.3 L16.5 17.5 L18 28 L19 27.5 L14.3 36.6Z" fill="#e8860c"/><path d="M16.5 17.5 L27.2 14.3 L29.6 16.1 L18 19.5Z" fill="#fedb6c"/><path d="M18 19.5 L29.6 16.1 L29.6 24.5 L18 28Z" fill="#fbc030"/><path d="M19 27.5 L29.6 24.5 L32.7 25 L21.5 29.5Z" fill="#fedb6c"/><path d="M21.5 29.5 L32.7 25 L32.8 33.1 L23.1 38.9Z" fill="#fbbf2e"/><path d="M14.3 36.6 L19 27.5 L21.5 29.5 L23.1 38.9Z" fill="#f19814"/><ellipse cx="23.8" cy="20.8" rx="2.6" ry="1.5" fill="#df7d08"/><ellipse cx="27.3" cy="30.6" rx="2.6" ry="1.6" fill="#df7d08"/></svg>
<div class="t" style="left:381.4px;top:225.7px;letter-spacing:0.79px;">Applecrest Estates Demo (121/146)</div>
<div class="a" style="left:369.5px;top:263.0px;width:10.5px;height:0;border-top:1px dotted #8f8f8f"></div>
<svg style="left:356.0px;top:256.5px;filter:blur(0.25px)" width="13" height="13" viewBox="0 0 13 13"><rect x="0.5" y="0.5" width="12" height="12" fill="#fff" stroke="#808080"/><path d="M2.6 6.5 H10.4" stroke="#111" stroke-width="1.5"/></svg>
<svg style="left:379.3px;top:248.79999999999998px;filter:blur(0.45px)" width="26" height="26" viewBox="0 0 26 26"><path d="M14 2.5 L17 0.4 L20.2 0.8 L23.8 4.9 L23.6 9 Z" fill="#c8923a"/><path d="M0.5 6 L16.8 0.9 C19 3 21.5 4.5 23.9 5.2 L24.2 17.8 L5.6 24.5 C3.5 19 1.5 12 0.5 6Z" fill="url(#fol)" stroke="#e9a93c" stroke-width="0.7"/><path d="M3 7.5 C4 13 5.5 18 7.2 22.3" stroke="#fff3cc" stroke-width="1.2" fill="none" opacity="0.8"/><rect x="16.9" y="17.4" width="8.6" height="8.4" rx="1" fill="#5cb81c" stroke="rgba(0,0,0,0.22)" stroke-width="0.8"/></svg>
<div class="t" style="left:409.2px;top:253.2px;letter-spacing:0.34px;">100</div>
<div class="t" style="left:451.6px;top:253.2px;letter-spacing:0.88px;">Development (53/63)</div>
<div class="a" style="left:369.5px;top:648.0px;width:10.5px;height:0;border-top:1px dotted #8f8f8f"></div>
<svg style="left:356.0px;top:641.5px;filter:blur(0.25px)" width="13" height="13" viewBox="0 0 13 13"><rect x="0.5" y="0.5" width="12" height="12" fill="#fff" stroke="#808080"/><path d="M2.6 6.5 H10.4" stroke="#111" stroke-width="1.5"/><path d="M6.5 2.6 V10.4" stroke="#111" stroke-width="1.5"/></svg>
<svg style="left:379.3px;top:633.8px;filter:blur(0.45px)" width="26" height="26" viewBox="0 0 26 26"><path d="M14 2.5 L17 0.4 L20.2 0.8 L23.8 4.9 L23.6 9 Z" fill="#c8923a"/><path d="M0.5 6 L16.8 0.9 C19 3 21.5 4.5 23.9 5.2 L24.2 17.8 L5.6 24.5 C3.5 19 1.5 12 0.5 6Z" fill="url(#fol)" stroke="#e9a93c" stroke-width="0.7"/><path d="M3 7.5 C4 13 5.5 18 7.2 22.3" stroke="#fff3cc" stroke-width="1.2" fill="none" opacity="0.8"/><rect x="16.9" y="17.4" width="8.6" height="8.4" rx="1" fill="#4a8ee0" stroke="rgba(0,0,0,0.22)" stroke-width="0.8"/></svg>
<div class="t" style="left:409.2px;top:638.2px;letter-spacing:0.34px;">200</div>
<div class="t" style="left:451.6px;top:638.2px;letter-spacing:1.08px;">Architecture &amp; Engineering (8/9)</div>
<div class="a" style="left:369.5px;top:675.5px;width:10.5px;height:0;border-top:1px dotted #8f8f8f"></div>
<svg style="left:356.0px;top:669.0px;filter:blur(0.25px)" width="13" height="13" viewBox="0 0 13 13"><rect x="0.5" y="0.5" width="12" height="12" fill="#fff" stroke="#808080"/><path d="M2.6 6.5 H10.4" stroke="#111" stroke-width="1.5"/><path d="M6.5 2.6 V10.4" stroke="#111" stroke-width="1.5"/></svg>
<svg style="left:379.3px;top:661.3px;filter:blur(0.45px)" width="26" height="26" viewBox="0 0 26 26"><path d="M14 2.5 L17 0.4 L20.2 0.8 L23.8 4.9 L23.6 9 Z" fill="#c8923a"/><path d="M0.5 6 L16.8 0.9 C19 3 21.5 4.5 23.9 5.2 L24.2 17.8 L5.6 24.5 C3.5 19 1.5 12 0.5 6Z" fill="url(#fol)" stroke="#e9a93c" stroke-width="0.7"/><path d="M3 7.5 C4 13 5.5 18 7.2 22.3" stroke="#fff3cc" stroke-width="1.2" fill="none" opacity="0.8"/><rect x="16.9" y="17.4" width="8.6" height="8.4" rx="1" fill="#e6d35a" stroke="rgba(0,0,0,0.22)" stroke-width="0.8"/></svg>
<div class="t" style="left:409.2px;top:665.7px;letter-spacing:0.34px;">300</div>
<div class="t" style="left:451.6px;top:665.7px;letter-spacing:1.24px;">Construction (9/11)</div>
<div class="a" style="left:369.5px;top:703.0px;width:10.5px;height:0;border-top:1px dotted #8f8f8f"></div>
<svg style="left:356.0px;top:696.5px;filter:blur(0.25px)" width="13" height="13" viewBox="0 0 13 13"><rect x="0.5" y="0.5" width="12" height="12" fill="#fff" stroke="#808080"/><path d="M2.6 6.5 H10.4" stroke="#111" stroke-width="1.5"/><path d="M6.5 2.6 V10.4" stroke="#111" stroke-width="1.5"/></svg>
<svg style="left:379.3px;top:688.8px;filter:blur(0.45px)" width="26" height="26" viewBox="0 0 26 26"><path d="M14 2.5 L17 0.4 L20.2 0.8 L23.8 4.9 L23.6 9 Z" fill="#c8923a"/><path d="M0.5 6 L16.8 0.9 C19 3 21.5 4.5 23.9 5.2 L24.2 17.8 L5.6 24.5 C3.5 19 1.5 12 0.5 6Z" fill="url(#fol)" stroke="#e9a93c" stroke-width="0.7"/><path d="M3 7.5 C4 13 5.5 18 7.2 22.3" stroke="#fff3cc" stroke-width="1.2" fill="none" opacity="0.8"/><rect x="16.9" y="17.4" width="8.6" height="8.4" rx="1" fill="#1f5fd0" stroke="rgba(0,0,0,0.22)" stroke-width="0.8"/></svg>
<div class="t" style="left:409.2px;top:693.2px;letter-spacing:0.34px;">400</div>
<div class="t" style="left:451.6px;top:693.2px;letter-spacing:1.01px;">Partnership (9/12)</div>
<div class="a" style="left:369.5px;top:730.5px;width:10.5px;height:0;border-top:1px dotted #8f8f8f"></div>
<svg style="left:356.0px;top:724.0px;filter:blur(0.25px)" width="13" height="13" viewBox="0 0 13 13"><rect x="0.5" y="0.5" width="12" height="12" fill="#fff" stroke="#808080"/><path d="M2.6 6.5 H10.4" stroke="#111" stroke-width="1.5"/><path d="M6.5 2.6 V10.4" stroke="#111" stroke-width="1.5"/></svg>
<svg style="left:379.3px;top:716.3px;filter:blur(0.45px)" width="26" height="26" viewBox="0 0 26 26"><path d="M14 2.5 L17 0.4 L20.2 0.8 L23.8 4.9 L23.6 9 Z" fill="#c8923a"/><path d="M0.5 6 L16.8 0.9 C19 3 21.5 4.5 23.9 5.2 L24.2 17.8 L5.6 24.5 C3.5 19 1.5 12 0.5 6Z" fill="url(#fol)" stroke="#e9a93c" stroke-width="0.7"/><path d="M3 7.5 C4 13 5.5 18 7.2 22.3" stroke="#fff3cc" stroke-width="1.2" fill="none" opacity="0.8"/><rect x="16.9" y="17.4" width="8.6" height="8.4" rx="1" fill="#ecd2a2" stroke="rgba(0,0,0,0.22)" stroke-width="0.8"/></svg>
<div class="t" style="left:409.2px;top:720.7px;letter-spacing:0.34px;">500</div>
<div class="t" style="left:451.6px;top:720.7px;letter-spacing:0.72px;">Funding Sources (12/19)</div>
<div class="a" style="left:369.5px;top:758.0px;width:10.5px;height:0;border-top:1px dotted #8f8f8f"></div>
<svg style="left:356.0px;top:751.5px;filter:blur(0.25px)" width="13" height="13" viewBox="0 0 13 13"><rect x="0.5" y="0.5" width="12" height="12" fill="#fff" stroke="#808080"/><path d="M2.6 6.5 H10.4" stroke="#111" stroke-width="1.5"/><path d="M6.5 2.6 V10.4" stroke="#111" stroke-width="1.5"/></svg>
<svg style="left:379.3px;top:743.8px;filter:blur(0.45px)" width="26" height="26" viewBox="0 0 26 26"><path d="M14 2.5 L17 0.4 L20.2 0.8 L23.8 4.9 L23.6 9 Z" fill="#c8923a"/><path d="M0.5 6 L16.8 0.9 C19 3 21.5 4.5 23.9 5.2 L24.2 17.8 L5.6 24.5 C3.5 19 1.5 12 0.5 6Z" fill="url(#fol)" stroke="#e9a93c" stroke-width="0.7"/><path d="M3 7.5 C4 13 5.5 18 7.2 22.3" stroke="#fff3cc" stroke-width="1.2" fill="none" opacity="0.8"/><rect x="16.9" y="17.4" width="8.6" height="8.4" rx="1" fill="#e09a45" stroke="rgba(0,0,0,0.22)" stroke-width="0.8"/></svg>
<div class="t" style="left:409.2px;top:748.2px;letter-spacing:0.34px;">600</div>
<div class="t" style="left:451.6px;top:748.2px;letter-spacing:1.07px;">Operations (13/15)</div>
<div class="a" style="left:369.5px;top:785.5px;width:10.5px;height:0;border-top:1px dotted #8f8f8f"></div>
<svg style="left:356.0px;top:779.0px;filter:blur(0.25px)" width="13" height="13" viewBox="0 0 13 13"><rect x="0.5" y="0.5" width="12" height="12" fill="#fff" stroke="#808080"/><path d="M2.6 6.5 H10.4" stroke="#111" stroke-width="1.5"/><path d="M6.5 2.6 V10.4" stroke="#111" stroke-width="1.5"/></svg>
<svg style="left:379.3px;top:771.3px;filter:blur(0.45px)" width="26" height="26" viewBox="0 0 26 26"><path d="M14 2.5 L17 0.4 L20.2 0.8 L23.8 4.9 L23.6 9 Z" fill="#c8923a"/><path d="M0.5 6 L16.8 0.9 C19 3 21.5 4.5 23.9 5.2 L24.2 17.8 L5.6 24.5 C3.5 19 1.5 12 0.5 6Z" fill="url(#fol)" stroke="#e9a93c" stroke-width="0.7"/><path d="M3 7.5 C4 13 5.5 18 7.2 22.3" stroke="#fff3cc" stroke-width="1.2" fill="none" opacity="0.8"/><rect x="16.9" y="17.4" width="8.6" height="8.4" rx="1" fill="#d4d4d8" stroke="rgba(0,0,0,0.22)" stroke-width="0.8"/></svg>
<div class="t" style="left:409.2px;top:775.7px;letter-spacing:0.34px;">700</div>
<div class="t" style="left:451.6px;top:775.7px;letter-spacing:0.78px;">Correspondence (14)</div>
<div class="a" style="left:369.5px;top:813.0px;width:10.5px;height:0;border-top:1px dotted #8f8f8f"></div>
<svg style="left:356.0px;top:806.5px;filter:blur(0.25px)" width="13" height="13" viewBox="0 0 13 13"><rect x="0.5" y="0.5" width="12" height="12" fill="#fff" stroke="#808080"/><path d="M2.6 6.5 H10.4" stroke="#111" stroke-width="1.5"/><path d="M6.5 2.6 V10.4" stroke="#111" stroke-width="1.5"/></svg>
<svg style="left:379.3px;top:798.8px;filter:blur(0.45px)" width="26" height="26" viewBox="0 0 26 26"><path d="M14 2.5 L17 0.4 L20.2 0.8 L23.8 4.9 L23.6 9 Z" fill="#c8923a"/><path d="M0.5 6 L16.8 0.9 C19 3 21.5 4.5 23.9 5.2 L24.2 17.8 L5.6 24.5 C3.5 19 1.5 12 0.5 6Z" fill="url(#fol)" stroke="#e9a93c" stroke-width="0.7"/><path d="M3 7.5 C4 13 5.5 18 7.2 22.3" stroke="#fff3cc" stroke-width="1.2" fill="none" opacity="0.8"/><rect x="16.9" y="17.4" width="8.6" height="8.4" rx="1" fill="#1f5fd0" stroke="rgba(0,0,0,0.22)" stroke-width="0.8"/></svg>
<div class="t" style="left:409.2px;top:803.2px;letter-spacing:0.34px;">800</div>
<div class="t" style="left:451.6px;top:803.2px;letter-spacing:0.62px;">Monthly Financials (3)</div>
<div class="a" style="left:397px;top:290.5px;width:10px;height:0;border-top:1px dotted #8f8f8f"></div>
<svg style="left:383.7px;top:284.0px;filter:blur(0.25px)" width="13" height="13" viewBox="0 0 13 13"><rect x="0.5" y="0.5" width="12" height="12" fill="#fff" stroke="#808080"/><path d="M2.6 6.5 H10.4" stroke="#111" stroke-width="1.5"/></svg>
<svg style="left:406.8px;top:276.29999999999995px;filter:blur(0.45px)" width="26" height="26" viewBox="0 0 26 26"><path d="M14 2.5 L17 0.4 L20.2 0.8 L23.8 4.9 L23.6 9 Z" fill="#c8923a"/><path d="M0.5 6 L16.8 0.9 C19 3 21.5 4.5 23.9 5.2 L24.2 17.8 L5.6 24.5 C3.5 19 1.5 12 0.5 6Z" fill="url(#fol)" stroke="#e9a93c" stroke-width="0.7"/><path d="M3 7.5 C4 13 5.5 18 7.2 22.3" stroke="#fff3cc" stroke-width="1.2" fill="none" opacity="0.8"/><rect x="16.9" y="17.4" width="8.6" height="8.4" rx="1" fill="#5cb81c" stroke="rgba(0,0,0,0.22)" stroke-width="0.8"/></svg>
<div class="t" style="left:436.8px;top:280.7px;letter-spacing:0.67px;">110</div>
<div class="t" style="left:479.0px;top:280.7px;letter-spacing:0.68px;">Developer (4)</div>
<div class="a" style="left:397px;top:428.0px;width:10px;height:0;border-top:1px dotted #8f8f8f"></div>
<svg style="left:383.7px;top:421.5px;filter:blur(0.25px)" width="13" height="13" viewBox="0 0 13 13"><rect x="0.5" y="0.5" width="12" height="12" fill="#fff" stroke="#808080"/><path d="M2.6 6.5 H10.4" stroke="#111" stroke-width="1.5"/><path d="M6.5 2.6 V10.4" stroke="#111" stroke-width="1.5"/></svg>
<svg style="left:406.8px;top:413.79999999999995px;filter:blur(0.45px)" width="26" height="26" viewBox="0 0 26 26"><path d="M14 2.5 L17 0.4 L20.2 0.8 L23.8 4.9 L23.6 9 Z" fill="#c8923a"/><path d="M0.5 6 L16.8 0.9 C19 3 21.5 4.5 23.9 5.2 L24.2 17.8 L5.6 24.5 C3.5 19 1.5 12 0.5 6Z" fill="url(#fol)" stroke="#e9a93c" stroke-width="0.7"/><path d="M3 7.5 C4 13 5.5 18 7.2 22.3" stroke="#fff3cc" stroke-width="1.2" fill="none" opacity="0.8"/><rect x="16.9" y="17.4" width="8.6" height="8.4" rx="1" fill="#5cb81c" stroke="rgba(0,0,0,0.22)" stroke-width="0.8"/></svg>
<div class="t" style="left:436.8px;top:418.2px;letter-spacing:0.26px;">120</div>
<div class="t" style="left:479.0px;top:418.2px;letter-spacing:0.85px;">Development (18/26)</div>
<div class="a" style="left:397px;top:455.5px;width:10px;height:0;border-top:1px dotted #8f8f8f"></div>
<svg style="left:383.7px;top:449.0px;filter:blur(0.25px)" width="13" height="13" viewBox="0 0 13 13"><rect x="0.5" y="0.5" width="12" height="12" fill="#fff" stroke="#808080"/><path d="M2.6 6.5 H10.4" stroke="#111" stroke-width="1.5"/><path d="M6.5 2.6 V10.4" stroke="#111" stroke-width="1.5"/></svg>
<svg style="left:406.8px;top:441.29999999999995px;filter:blur(0.45px)" width="26" height="26" viewBox="0 0 26 26"><path d="M14 2.5 L17 0.4 L20.2 0.8 L23.8 4.9 L23.6 9 Z" fill="#c8923a"/><path d="M0.5 6 L16.8 0.9 C19 3 21.5 4.5 23.9 5.2 L24.2 17.8 L5.6 24.5 C3.5 19 1.5 12 0.5 6Z" fill="url(#fol)" stroke="#e9a93c" stroke-width="0.7"/><path d="M3 7.5 C4 13 5.5 18 7.2 22.3" stroke="#fff3cc" stroke-width="1.2" fill="none" opacity="0.8"/><rect x="16.9" y="17.4" width="8.6" height="8.4" rx="1" fill="#5cb81c" stroke="rgba(0,0,0,0.22)" stroke-width="0.8"/></svg>
<div class="t" style="left:436.8px;top:445.7px;letter-spacing:0.26px;">130</div>
<div class="t" style="left:479.0px;top:445.7px;letter-spacing:1.04px;">Site Information (4/5)</div>
<div class="a" style="left:397px;top:483.0px;width:10px;height:0;border-top:1px dotted #8f8f8f"></div>
<svg style="left:383.7px;top:476.5px;filter:blur(0.25px)" width="13" height="13" viewBox="0 0 13 13"><rect x="0.5" y="0.5" width="12" height="12" fill="#fff" stroke="#808080"/><path d="M2.6 6.5 H10.4" stroke="#111" stroke-width="1.5"/><path d="M6.5 2.6 V10.4" stroke="#111" stroke-width="1.5"/></svg>
<svg style="left:406.8px;top:468.79999999999995px;filter:blur(0.45px)" width="26" height="26" viewBox="0 0 26 26"><path d="M14 2.5 L17 0.4 L20.2 0.8 L23.8 4.9 L23.6 9 Z" fill="#c8923a"/><path d="M0.5 6 L16.8 0.9 C19 3 21.5 4.5 23.9 5.2 L24.2 17.8 L5.6 24.5 C3.5 19 1.5 12 0.5 6Z" fill="url(#fol)" stroke="#e9a93c" stroke-width="0.7"/><path d="M3 7.5 C4 13 5.5 18 7.2 22.3" stroke="#fff3cc" stroke-width="1.2" fill="none" opacity="0.8"/><rect x="16.9" y="17.4" width="8.6" height="8.4" rx="1" fill="#5cb81c" stroke="rgba(0,0,0,0.22)" stroke-width="0.8"/></svg>
<div class="t" style="left:436.8px;top:473.2px;letter-spacing:0.26px;">140</div>
<div class="t" style="left:479.0px;top:473.2px;letter-spacing:0.79px;">Site Zoning &amp; Permits (2/3)</div>
<div class="a" style="left:397px;top:510.5px;width:10px;height:0;border-top:1px dotted #8f8f8f"></div>
<svg style="left:383.7px;top:504.0px;filter:blur(0.25px)" width="13" height="13" viewBox="0 0 13 13"><rect x="0.5" y="0.5" width="12" height="12" fill="#fff" stroke="#808080"/><path d="M2.6 6.5 H10.4" stroke="#111" stroke-width="1.5"/><path d="M6.5 2.6 V10.4" stroke="#111" stroke-width="1.5"/></svg>
<svg style="left:406.8px;top:496.29999999999995px;filter:blur(0.45px)" width="26" height="26" viewBox="0 0 26 26"><path d="M14 2.5 L17 0.4 L20.2 0.8 L23.8 4.9 L23.6 9 Z" fill="#c8923a"/><path d="M0.5 6 L16.8 0.9 C19 3 21.5 4.5 23.9 5.2 L24.2 17.8 L5.6 24.5 C3.5 19 1.5 12 0.5 6Z" fill="url(#fol)" stroke="#e9a93c" stroke-width="0.7"/><path d="M3 7.5 C4 13 5.5 18 7.2 22.3" stroke="#fff3cc" stroke-width="1.2" fill="none" opacity="0.8"/><rect x="16.9" y="17.4" width="8.6" height="8.4" rx="1" fill="#5cb81c" stroke="rgba(0,0,0,0.22)" stroke-width="0.8"/></svg>
<div class="t" style="left:436.8px;top:500.7px;letter-spacing:0.26px;">150</div>
<div class="t" style="left:479.0px;top:500.7px;letter-spacing:0.55px;">Appraisals (2)</div>
<div class="a" style="left:397px;top:538.0px;width:10px;height:0;border-top:1px dotted #8f8f8f"></div>
<svg style="left:383.7px;top:531.5px;filter:blur(0.25px)" width="13" height="13" viewBox="0 0 13 13"><rect x="0.5" y="0.5" width="12" height="12" fill="#fff" stroke="#808080"/><path d="M2.6 6.5 H10.4" stroke="#111" stroke-width="1.5"/><path d="M6.5 2.6 V10.4" stroke="#111" stroke-width="1.5"/></svg>
<svg style="left:406.8px;top:523.8px;filter:blur(0.45px)" width="26" height="26" viewBox="0 0 26 26"><path d="M14 2.5 L17 0.4 L20.2 0.8 L23.8 4.9 L23.6 9 Z" fill="#c8923a"/><path d="M0.5 6 L16.8 0.9 C19 3 21.5 4.5 23.9 5.2 L24.2 17.8 L5.6 24.5 C3.5 19 1.5 12 0.5 6Z" fill="url(#fol)" stroke="#e9a93c" stroke-width="0.7"/><path d="M3 7.5 C4 13 5.5 18 7.2 22.3" stroke="#fff3cc" stroke-width="1.2" fill="none" opacity="0.8"/><rect x="16.9" y="17.4" width="8.6" height="8.4" rx="1" fill="#5cb81c" stroke="rgba(0,0,0,0.22)" stroke-width="0.8"/></svg>
<div class="t" style="left:436.8px;top:528.2px;letter-spacing:0.26px;">160</div>
<div class="t" style="left:479.0px;top:528.2px;letter-spacing:0.72px;">Purchase (1)</div>
<div class="a" style="left:397px;top:565.5px;width:10px;height:0;border-top:1px dotted #8f8f8f"></div>
<svg style="left:383.7px;top:559.0px;filter:blur(0.25px)" width="13" height="13" viewBox="0 0 13 13"><rect x="0.5" y="0.5" width="12" height="12" fill="#fff" stroke="#808080"/><path d="M2.6 6.5 H10.4" stroke="#111" stroke-width="1.5"/><path d="M6.5 2.6 V10.4" stroke="#111" stroke-width="1.5"/></svg>
<svg style="left:406.8px;top:551.3px;filter:blur(0.45px)" width="26" height="26" viewBox="0 0 26 26"><path d="M14 2.5 L17 0.4 L20.2 0.8 L23.8 4.9 L23.6 9 Z" fill="#c8923a"/><path d="M0.5 6 L16.8 0.9 C19 3 21.5 4.5 23.9 5.2 L24.2 17.8 L5.6 24.5 C3.5 19 1.5 12 0.5 6Z" fill="url(#fol)" stroke="#e9a93c" stroke-width="0.7"/><path d="M3 7.5 C4 13 5.5 18 7.2 22.3" stroke="#fff3cc" stroke-width="1.2" fill="none" opacity="0.8"/><rect x="16.9" y="17.4" width="8.6" height="8.4" rx="1" fill="#5cb81c" stroke="rgba(0,0,0,0.22)" stroke-width="0.8"/></svg>
<div class="t" style="left:436.8px;top:555.7px;letter-spacing:0.26px;">170</div>
<div class="t" style="left:479.0px;top:555.7px;letter-spacing:1.00px;">Utilities (2)</div>
<div class="a" style="left:397px;top:593.0px;width:10px;height:0;border-top:1px dotted #8f8f8f"></div>
<svg style="left:383.7px;top:586.5px;filter:blur(0.25px)" width="13" height="13" viewBox="0 0 13 13"><rect x="0.5" y="0.5" width="12" height="12" fill="#fff" stroke="#808080"/><path d="M2.6 6.5 H10.4" stroke="#111" stroke-width="1.5"/><path d="M6.5 2.6 V10.4" stroke="#111" stroke-width="1.5"/></svg>
<svg style="left:406.8px;top:578.8px;filter:blur(0.45px)" width="26" height="26" viewBox="0 0 26 26"><path d="M14 2.5 L17 0.4 L20.2 0.8 L23.8 4.9 L23.6 9 Z" fill="#c8923a"/><path d="M0.5 6 L16.8 0.9 C19 3 21.5 4.5 23.9 5.2 L24.2 17.8 L5.6 24.5 C3.5 19 1.5 12 0.5 6Z" fill="url(#fol)" stroke="#e9a93c" stroke-width="0.7"/><path d="M3 7.5 C4 13 5.5 18 7.2 22.3" stroke="#fff3cc" stroke-width="1.2" fill="none" opacity="0.8"/><rect x="16.9" y="17.4" width="8.6" height="8.4" rx="1" fill="#5cb81c" stroke="rgba(0,0,0,0.22)" stroke-width="0.8"/></svg>
<div class="t" style="left:436.8px;top:583.2px;letter-spacing:0.26px;">180</div>
<div class="t" style="left:479.0px;top:583.2px;letter-spacing:1.04px;">Marketing (1)</div>
<div class="a" style="left:397px;top:620.5px;width:10px;height:0;border-top:1px dotted #8f8f8f"></div>
<svg style="left:383.7px;top:614.0px;filter:blur(0.25px)" width="13" height="13" viewBox="0 0 13 13"><rect x="0.5" y="0.5" width="12" height="12" fill="#fff" stroke="#808080"/><path d="M2.6 6.5 H10.4" stroke="#111" stroke-width="1.5"/><path d="M6.5 2.6 V10.4" stroke="#111" stroke-width="1.5"/></svg>
<svg style="left:406.8px;top:606.3px;filter:blur(0.45px)" width="26" height="26" viewBox="0 0 26 26"><path d="M14 2.5 L17 0.4 L20.2 0.8 L23.8 4.9 L23.6 9 Z" fill="#c8923a"/><path d="M0.5 6 L16.8 0.9 C19 3 21.5 4.5 23.9 5.2 L24.2 17.8 L5.6 24.5 C3.5 19 1.5 12 0.5 6Z" fill="url(#fol)" stroke="#e9a93c" stroke-width="0.7"/><path d="M3 7.5 C4 13 5.5 18 7.2 22.3" stroke="#fff3cc" stroke-width="1.2" fill="none" opacity="0.8"/><rect x="16.9" y="17.4" width="8.6" height="8.4" rx="1" fill="#5cb81c" stroke="rgba(0,0,0,0.22)" stroke-width="0.8"/></svg>
<div class="t" style="left:436.8px;top:610.7px;letter-spacing:0.26px;">190</div>
<div class="t" style="left:479.0px;top:610.7px;letter-spacing:1.11px;">Other (19)</div>
<div class="a" style="left:418.5px;top:317.5px;width:15.5px;height:0;border-top:1px dotted #8f8f8f"></div>
<svg style="left:434.4px;top:302.0px;filter:blur(0.45px)" width="21" height="27" viewBox="0 0 21 27"><path d="M0.6 0.8 L17.8 0.4 L20 2.4 C19.6 8 19.8 13 20.6 18.6 L5.2 26.6 L3 23.6 C2.6 16 1.6 8 0.6 0.8Z" fill="url(#pap)" stroke="#6c8de2" stroke-width="1.2"/><path d="M3.2 23.4 L19.6 16.4" stroke="#5f7fd8" stroke-width="1" fill="none"/></svg>
<div class="t" style="left:435.2px;top:308.9px;font-size:14px;letter-spacing:-0.43px;color:#e5222c;text-shadow:0 0 0.5px #e5222c">new</div>
<div class="a" style="left:460.4px;top:306.6px;width:254.4px;height:17.6px;background:#0f6fa8;"></div>
<div class="t" style="left:465.0px;top:308.2px;letter-spacing:0.85px;color:#fff;">12/08/2015 - Developer Experience</div>
<div class="a" style="left:418.5px;top:345.0px;width:15.5px;height:0;border-top:1px dotted #8f8f8f"></div>
<svg style="left:434.4px;top:329.5px;filter:blur(0.45px)" width="21" height="27" viewBox="0 0 21 27"><path d="M0.6 0.8 L17.8 0.4 L20 2.4 C19.6 8 19.8 13 20.6 18.6 L5.2 26.6 L3 23.6 C2.6 16 1.6 8 0.6 0.8Z" fill="url(#pap)" stroke="#6c8de2" stroke-width="1.2"/><path d="M3.2 23.4 L19.6 16.4" stroke="#5f7fd8" stroke-width="1" fill="none"/></svg>
<div class="t" style="left:435.2px;top:336.4px;font-size:14px;letter-spacing:-0.43px;color:#e5222c;text-shadow:0 0 0.5px #e5222c">new</div>
<div class="t" style="left:465.0px;top:335.7px;letter-spacing:0.70px;">12/08/2015 - Developer Specs</div>
<div class="a" style="left:418.5px;top:372.5px;width:15.5px;height:0;border-top:1px dotted #8f8f8f"></div>
<svg style="left:434.4px;top:357.0px;filter:blur(0.45px)" width="21" height="27" viewBox="0 0 21 27"><path d="M0.6 0.8 L17.8 0.4 L20 2.4 C19.6 8 19.8 13 20.6 18.6 L5.2 26.6 L3 23.6 C2.6 16 1.6 8 0.6 0.8Z" fill="url(#pap)" stroke="#6c8de2" stroke-width="1.2"/><path d="M3.2 23.4 L19.6 16.4" stroke="#5f7fd8" stroke-width="1" fill="none"/></svg>
<div class="t" style="left:435.2px;top:363.9px;font-size:14px;letter-spacing:-0.43px;color:#e5222c;text-shadow:0 0 0.5px #e5222c">new</div>
<div class="t" style="left:465.0px;top:363.2px;letter-spacing:0.76px;">12/08/2015 - Test (New Machine) 01</div>
<div class="a" style="left:418.5px;top:400.0px;width:15.5px;height:0;border-top:1px dotted #8f8f8f"></div>
<svg style="left:434.4px;top:384.5px;filter:blur(0.45px)" width="21" height="27" viewBox="0 0 21 27"><path d="M0.6 0.8 L17.8 0.4 L20 2.4 C19.6 8 19.8 13 20.6 18.6 L5.2 26.6 L3 23.6 C2.6 16 1.6 8 0.6 0.8Z" fill="url(#pap)" stroke="#6c8de2" stroke-width="1.2"/><path d="M3.2 23.4 L19.6 16.4" stroke="#5f7fd8" stroke-width="1" fill="none"/></svg>
<div class="t" style="left:463.5px;top:390.7px;letter-spacing:0.70px;">04/05/2015 - RFPs_and_Change_Orders</div>
<div class="a" style="left:770px;top:247.5px;width:368px;height:517px;background:#8a8a9e;"></div>
<div class="a" style="left:757px;top:233.7px;width:375.6px;height:521.3px;background:#a7ada9;border:1px solid #63636c"></div>
<div class="a" style="left:758px;top:234.7px;width:373.6px;height:18.6px;background:linear-gradient(#ece5d4,#e6d7bd 45%,#dfc9ab 80%,#e6d6bf);"></div>
<div class="a" style="left:759.6px;top:252.8px;width:370.2px;height:499.2px;background:#ffffff;border:1.4px solid #3e3e48"></div>
<div class="a" style="left:761px;top:379.7px;width:368px;height:1.1px;background:#3a3a3a;"></div>
<div class="a" style="left:1110.9px;top:236.8px;width:15.9px;height:14.6px;background:#fdf6e6;border:1.2px solid #9a742a;border-radius:3.5px"></div>
<svg style="left:1114.5px;top:239.5px" width="9" height="9" viewBox="0 0 9 9"><path d="M1 1 L8 8 M8 1 L1 8" stroke="#76520f" stroke-width="2"/></svg>
<svg style="left:767.5px;top:274.3px;filter:blur(0.6px)" width="56" height="66" viewBox="0 0 56 66"><defs><linearGradient id="g1" x1="0.2" y1="0" x2="0.6" y2="1"><stop offset="0" stop-color="#fff"/><stop offset="0.55" stop-color="#fafcff"/><stop offset="1" stop-color="#a9c8f6"/></linearGradient></defs><path d="M3.6 1.2 C16 2.6 32 3.6 46 3.8 C44.5 18 47.5 33 54.6 45.6 L14.4 64.2 C8.5 52 2 33 1.4 19.6 C1.2 13 2.2 6 3.6 1.2Z" fill="url(#g1)" stroke="#7f9fee" stroke-width="1.4"/><path d="M46 3.8 C44.5 18 47.5 33 54.6 45.6 L14.4 64.2 C12.5 60.5 10.6 56.5 8.8 52" fill="none" stroke="#3a62d8" stroke-width="2.3" stroke-linejoin="round"/><rect x="13.4" y="16.6" width="25.6" height="26" fill="#eef3fd" stroke="#3a5cc4" stroke-width="2.4"/><text x="26.2" y="37.6" text-anchor="middle" font-family="Liberation Sans, sans-serif" font-weight="bold" font-style="italic" font-size="23" fill="#1f3ea8" stroke="#1f3ea8" stroke-width="0.9" textLength="21" lengthAdjust="spacingAndGlyphs">W</text></svg>
<div class="t b" style="left:838.3px;top:297.0px;font-size:20.6px;letter-spacing:0.04px;color:#111;">.doc</div>
<div class="t b" style="left:765.0px;top:342.4px;font-size:15px;letter-spacing:0.21px;">Title:</div>
<div class="t" style="left:833.8px;top:342.8px;letter-spacing:0.68px;">Developer Experience</div>
<div class="t b" style="left:765.0px;top:361.4px;font-size:15px;letter-spacing:-0.27px;">Routing:</div>
<div class="t" style="left:833.8px;top:361.6px;letter-spacing:0.61px;">In Routing Queue</div>
<div class="a" style="left:941px;top:396px;width:2px;height:218px;background:linear-gradient(#cfccc4,#d6d3cb 80%,#ecebe6);"></div>
<div class="a" style="left:943px;top:396px;width:2px;height:218px;background:linear-gradient(#e6e4de,#ecebe6);"></div>
<svg style="left:768.5px;top:397px;filter:blur(0.5px)" width="22" height="22" viewBox="0 0 22 22"><path d="M2 1 L14.5 0.6 L17 3 C16.6 8 17 13 18 17.5 L6 21.5 C4.5 15 3.6 8 3 1Z" fill="url(#pap)" stroke="#a9b3e6" stroke-width="0.9"/><path d="M12 13.5 L20.5 20.5" stroke="#e8901e" stroke-width="3" stroke-linecap="round"/><circle cx="8" cy="10.3" r="6" fill="#9ccafa" stroke="#b8c4dc" stroke-width="1.6"/><ellipse cx="6.6" cy="8.6" rx="3" ry="2.2" fill="#d8ecff"/></svg>
<div class="t b" style="left:794.8px;top:398.7px;font-size:15px;letter-spacing:0.74px;">View (Ver. 4)</div>
<svg style="left:768.5px;top:424.5px;filter:blur(0.5px)" width="22" height="22" viewBox="0 0 22 22"><rect x="0.5" y="0.7" width="21" height="20.6" rx="1.5" fill="#3cb426" stroke="#2a9418" stroke-width="1"/><rect x="4" y="1.8" width="14" height="11" fill="#f6f6f4"/><rect x="5.5" y="15.3" width="11" height="6" fill="#c9cdd0"/><rect x="7" y="16.3" width="3.4" height="5" fill="#3cb426"/></svg>
<div class="t" style="left:794.8px;top:426.6px;letter-spacing:0.43px;">Upload New Version</div>
<svg style="left:768.5px;top:452px;filter:blur(0.5px)" width="22" height="22" viewBox="0 0 22 22"><path d="M0.8 6.5 L11.5 1 L21.5 13.5 L8 21.5Z" fill="#f9e272" stroke="#c29a20" stroke-width="1.1"/><path d="M5 7.5 L11.5 4 M7 10 L14 6.3 M9 12.5 L16 8.8 M11 15 L18 11.3" stroke="#5aa860" stroke-width="1.2"/><path d="M3.5 4 C4.5 1 8.5 -0.5 10.5 1.8 L8.5 3.8 C7.5 3 6.5 3.5 6 4.8Z" fill="#2f7ee0"/></svg>
<div class="t" style="left:794.8px;top:454.1px;letter-spacing:0.49px;">Comments (3)</div>
<svg style="left:768.5px;top:479.5px;filter:blur(0.5px)" width="22" height="22" viewBox="0 0 22 22"><path d="M1 1 h10 l3.5 3.5 v16.5 h-13.5z" fill="#fbfbfd" stroke="#9a9aa8" stroke-width="1"/><path d="M3 5 h7 M3 8 h8 M3 11 h6 M3 14 h5 M3 17 h5" stroke="#b0b4c0" stroke-width="1"/><circle cx="14.7" cy="14" r="7" fill="#2a92f2"/><path d="M14.7 9.5 V14.3 H18.5" stroke="#fff" stroke-width="1.7" fill="none"/></svg>
<div class="t" style="left:794.8px;top:481.6px;letter-spacing:0.86px;">Version History</div>
<svg style="left:768.5px;top:507px;filter:blur(0.5px)" width="22" height="22" viewBox="0 0 22 22"><path d="M1 5 L11.5 1 L20.5 14.5 L8.5 20Z" fill="#e7c890" stroke="#c89058" stroke-width="1.1"/><path d="M3.5 6 L11 3.2 L18 14 L9.5 17.6Z" fill="#f6f8fb"/><path d="M9 17.2 L17.6 13.6 L18.2 14.6 L9.6 18.4Z" fill="#c8d8f8"/><path d="M5 2.6 L9.5 0.8 L11.5 3.2 L7 5.4Z" fill="#2fa968"/></svg>
<div class="t" style="left:794.8px;top:509.1px;letter-spacing:0.46px;">Add - Clipboard</div>
<svg style="left:768.5px;top:536px;filter:blur(0.5px)" width="22" height="22" viewBox="0 0 22 22"><path d="M4 0.8 h16.5 v17 h-16.5z" fill="#f4f8ff" stroke="#7aa4e8" stroke-width="0.9"/><path d="M0.8 4.5 h16.5 v16.8 h-16.5z" fill="#f8fbff" stroke="#6a9ae4" stroke-width="1"/><g transform="translate(-1 1.5) scale(0.95)"><path d="M9.6 3 h1.5 v17.5 h-1.5z" fill="#3a8cf4"/><path d="M5.5 4.8 h9.8 l1.4 1.6 l-1.4 1.6 h-9.8 l1.2 -1.6z" fill="#3f92f6"/><path d="M15.2 10.4 h-9.6 l-1.4 1.6 l1.4 1.6 h9.6 l-1.2 -1.6z" fill="#3f92f6"/></g></svg>
<div class="t" style="left:794.8px;top:538.1px;letter-spacing:0.64px;">References (1)</div>
<svg style="left:768.5px;top:563.5px;filter:blur(0.5px)" width="22" height="22" viewBox="0 0 22 22"><rect x="0.8" y="1" width="20.4" height="18" rx="3.2" fill="#fcc436" stroke="#f19a12" stroke-width="1.3"/><path d="M2.5 3 L11 10.5 L19.5 3" fill="none" stroke="#f3a21c" stroke-width="1.3"/><path d="M2.5 17.5 L8 11.5 M19.5 17.5 L14 11.5" stroke="#f6b02a" stroke-width="1.1"/><path d="M3 2.2 h16" stroke="#ffe58a" stroke-width="1.2"/></svg>
<div class="t" style="left:794.8px;top:565.6px;letter-spacing:0.48px;">Email To...</div>
<svg style="left:768.5px;top:591px;filter:blur(0.5px)" width="22" height="22" viewBox="0 0 22 22"><rect x="0.8" y="1" width="20.4" height="18" rx="3.2" fill="#fcc436" stroke="#f19a12" stroke-width="1.3"/><path d="M2.5 3 L11 10.5 L19.5 3" fill="none" stroke="#f3a21c" stroke-width="1.3"/><path d="M2.5 17.5 L8 11.5 M19.5 17.5 L14 11.5" stroke="#f6b02a" stroke-width="1.1"/><path d="M3 2.2 h16" stroke="#ffe58a" stroke-width="1.2"/></svg>
<div class="t" style="left:794.8px;top:593.1px;letter-spacing:1.21px;">Notification</div>
<svg style="left:950px;top:397px;filter:blur(0.5px)" width="22" height="22" viewBox="0 0 22 22"><path d="M3 1 L14.5 0.6 L17 3 C16.6 8 17 13 18 17.5 L6 21.5 C4.5 15 3.6 8 3 1Z" fill="url(#pap)" stroke="#a9b3e6" stroke-width="0.9"/><path d="M1 1.5 L11.5 11.5" stroke="#8a8a92" stroke-width="1.7"/><path d="M10.5 10.2 L19.8 18.5" stroke="#e0402c" stroke-width="4.2" stroke-linecap="round"/><path d="M11.5 10 L19 16.8" stroke="#f58a78" stroke-width="1.2" stroke-linecap="round"/></svg>
<div class="t" style="left:976.0px;top:399.1px;letter-spacing:0.80px;">Edit</div>
<svg style="left:950px;top:424.5px;filter:blur(0.5px)" width="22" height="22" viewBox="0 0 22 22"><path d="M6.5 4.5 L10 4.5 L10 0.8 L19 0.8 C18.6 7 19.2 14 21 20.8 L4.5 20.8 C5.5 15 6 10 6.5 4.5Z" fill="url(#pap)" stroke="#8f9fe0" stroke-width="0.9"/><path d="M4.5 20.8 L21 20.8" stroke="#5a6ec8" stroke-width="1.4"/><path d="M0.8 14 C0.8 12.2 2.3 11.6 3.6 12.4 L5.6 14.4 C7 12.8 9 12.2 11.5 12.4 L11.2 10.6 L16.6 13.8 L13 19 L12.6 17 C11 16.8 9.8 17.2 9 18 L10.2 19.6 C8.4 22 1.2 22 0.8 18Z" fill="#2fc21e" stroke="#1e8a12" stroke-width="0.6"/><path d="M2.3 14.8 C3.2 14 4.2 14.8 5.2 16" stroke="#b8ff98" stroke-width="1" fill="none"/></svg>
<div class="t" style="left:976.0px;top:426.6px;letter-spacing:0.48px;">Move</div>
<svg style="left:950px;top:452px;filter:blur(0.5px)" width="22" height="22" viewBox="0 0 22 22"><path d="M2.5 9 L11 1.5 L20.5 9 L20.5 19 L2.5 19Z" fill="#ecce6a" stroke="#c8a038" stroke-width="0.9"/><path d="M6 3.5 h10 v10 h-10z" fill="#fbfcff" stroke="#b8c4e8" stroke-width="0.7"/><circle cx="10" cy="6.5" r="1.8" fill="#8ab0f0"/><path d="M2.5 9 L11.5 14.5 L20.5 9 L20.5 19 L2.5 19Z" fill="#f3da82" stroke="#c8a038" stroke-width="0.8"/><g transform="translate(-0.5 3.5) scale(0.85)"><path d="M0.8 14 C0.8 12.2 2.3 11.6 3.6 12.4 L5.6 14.4 C7 12.8 9 12.2 11.5 12.4 L11.2 10.6 L16.6 13.8 L13 19 L12.6 17 C11 16.8 9.8 17.2 9 18 L10.2 19.6 C8.4 22 1.2 22 0.8 18Z" fill="#2fc21e" stroke="#1e8a12" stroke-width="0.6"/><path d="M2.3 14.8 C3.2 14 4.2 14.8 5.2 16" stroke="#b8ff98" stroke-width="1" fill="none"/></g></svg>
<div class="t" style="left:976.0px;top:454.1px;letter-spacing:0.51px;">Route</div>
<svg style="left:950px;top:479.5px;filter:blur(0.5px)" width="22" height="22" viewBox="0 0 22 22"><path d="M2 1 L14.5 0.6 L17 3 C16.6 8 17 13 18 17.5 L6 21.5 C4.5 15 3.6 8 3 1Z" fill="url(#pap)" stroke="#a9b3e6" stroke-width="0.9"/><path d="M12.8 14.5 V12.5 C12.8 9.2 18.6 9.2 18.6 12.5 V14.5" fill="none" stroke="#b8bcc8" stroke-width="1.7"/><rect x="10.8" y="13.8" width="10" height="8.2" rx="1.6" fill="#ecd534" stroke="#c0a818" stroke-width="0.8"/><circle cx="15.8" cy="17.6" r="1.2" fill="#8a7410"/></svg>
<div class="t" style="left:976.0px;top:481.6px;letter-spacing:0.43px;">Person Access (17)</div>
<svg style="left:950px;top:507px;filter:blur(0.5px)" width="22" height="22" viewBox="0 0 22 22"><path d="M3 3.5 C3 0 19 0 19 3.5 L17.6 19.5 C17.6 22.3 4.4 22.3 4.4 19.5Z" fill="#7aa6f4" stroke="#4a78dc" stroke-width="0.9"/><ellipse cx="11" cy="3.6" rx="8" ry="2.9" fill="#c4daff" stroke="#5a88e8" stroke-width="0.9"/><path d="M7 8 L7.6 19.5 M11 8.5 V20 M15 8 L14.4 19.5" stroke="#c6dcff" stroke-width="1.7"/><ellipse cx="11" cy="3.6" rx="4.5" ry="1.3" fill="#5a8cec"/></svg>
<div class="t" style="left:976.0px;top:509.1px;letter-spacing:0.65px;">Delete Document</div>
<svg style="left:950px;top:536px;filter:blur(0.5px)" width="22" height="22" viewBox="0 0 22 22"><path d="M6.5 4.5 L10 4.5 L10 0.8 L19 0.8 C18.6 7 19.2 14 21 20.8 L4.5 20.8 C5.5 15 6 10 6.5 4.5Z" fill="url(#pap)" stroke="#8f9fe0" stroke-width="0.9"/><path d="M4.5 20.8 L21 20.8" stroke="#5a6ec8" stroke-width="1.4"/><path d="M0.8 14 C0.8 12.2 2.3 11.6 3.6 12.4 L5.6 14.4 C7 12.8 9 12.2 11.5 12.4 L11.2 10.6 L16.6 13.8 L13 19 L12.6 17 C11 16.8 9.8 17.2 9 18 L10.2 19.6 C8.4 22 1.2 22 0.8 18Z" fill="#2fc21e" stroke="#1e8a12" stroke-width="0.6"/><path d="M2.3 14.8 C3.2 14 4.2 14.8 5.2 16" stroke="#b8ff98" stroke-width="1" fill="none"/></svg>
<div class="t" style="left:976.0px;top:538.1px;letter-spacing:0.89px;">Checkout</div>
<svg style="left:950px;top:563.5px;filter:blur(0.5px)" width="22" height="22" viewBox="0 0 22 22"><path d="M4 0.8 h16.5 v17 h-16.5z" fill="#f4f8ff" stroke="#7aa4e8" stroke-width="0.9"/><path d="M0.8 4.5 h16.5 v16.8 h-16.5z" fill="#f8fbff" stroke="#6a9ae4" stroke-width="1"/><g transform="translate(-1 1.5) scale(0.95)"><path d="M9.6 3 h1.5 v17.5 h-1.5z" fill="#3a8cf4"/><path d="M5.5 4.8 h9.8 l1.4 1.6 l-1.4 1.6 h-9.8 l1.2 -1.6z" fill="#3f92f6"/><path d="M15.2 10.4 h-9.6 l-1.4 1.6 l1.4 1.6 h9.6 l-1.2 -1.6z" fill="#3f92f6"/></g></svg>
<div class="t" style="left:976.0px;top:565.6px;letter-spacing:0.45px;">Add To My Documents</div>
<div class="a" style="left:761px;top:627.5px;width:367.2px;height:23px;background:#7db27c;border-top:1px solid #6aa06a;border-bottom:1px solid #68a268;border-left:1.5px solid #4d6e55;border-right:1.5px solid #4d6e55"></div>
<div class="a" style="left:761px;top:650.5px;width:367.2px;height:96px;background:#c3dcc1;border:1.5px solid #4d6e55;border-top:none;border-bottom:1.4px solid #6b9b6b"></div>
<div class="t b" style="left:769.9px;top:630.3px;font-size:14px;letter-spacing:0.36px;color:#eaf43c;">File Details</div>
<div class="t" style="left:766.0px;top:655.4px;font-size:14.6px;letter-spacing:0.99px;color:#5a5a5a;">Uploader:</div>
<div class="t" style="left:848.4px;top:655.0px;letter-spacing:0.48px;color:#2d52a6;-webkit-text-stroke:0.55px #2d52a6">Billy R. Morrison (Starta)</div>
<div class="t" style="left:766.0px;top:674.5px;font-size:14.6px;letter-spacing:0.92px;color:#5a5a5a;">Uploaded:</div>
<div class="t" style="left:848.4px;top:674.8px;letter-spacing:0.95px;">12/8/2015 6:09 PM</div>
<div class="t" style="left:766.0px;top:693.7px;font-size:14.6px;letter-spacing:0.45px;color:#5a5a5a;">Size:</div>
<div class="t" style="left:848.4px;top:694.0px;letter-spacing:-0.24px;">23 KB</div>
<div class="t" style="left:766.0px;top:712.7px;font-size:14.6px;letter-spacing:0.80px;color:#5a5a5a;">Folder:</div>
<div class="t" style="left:848.4px;top:713.0px;letter-spacing:0.65px;">110 Developer</div>
</body></html>
